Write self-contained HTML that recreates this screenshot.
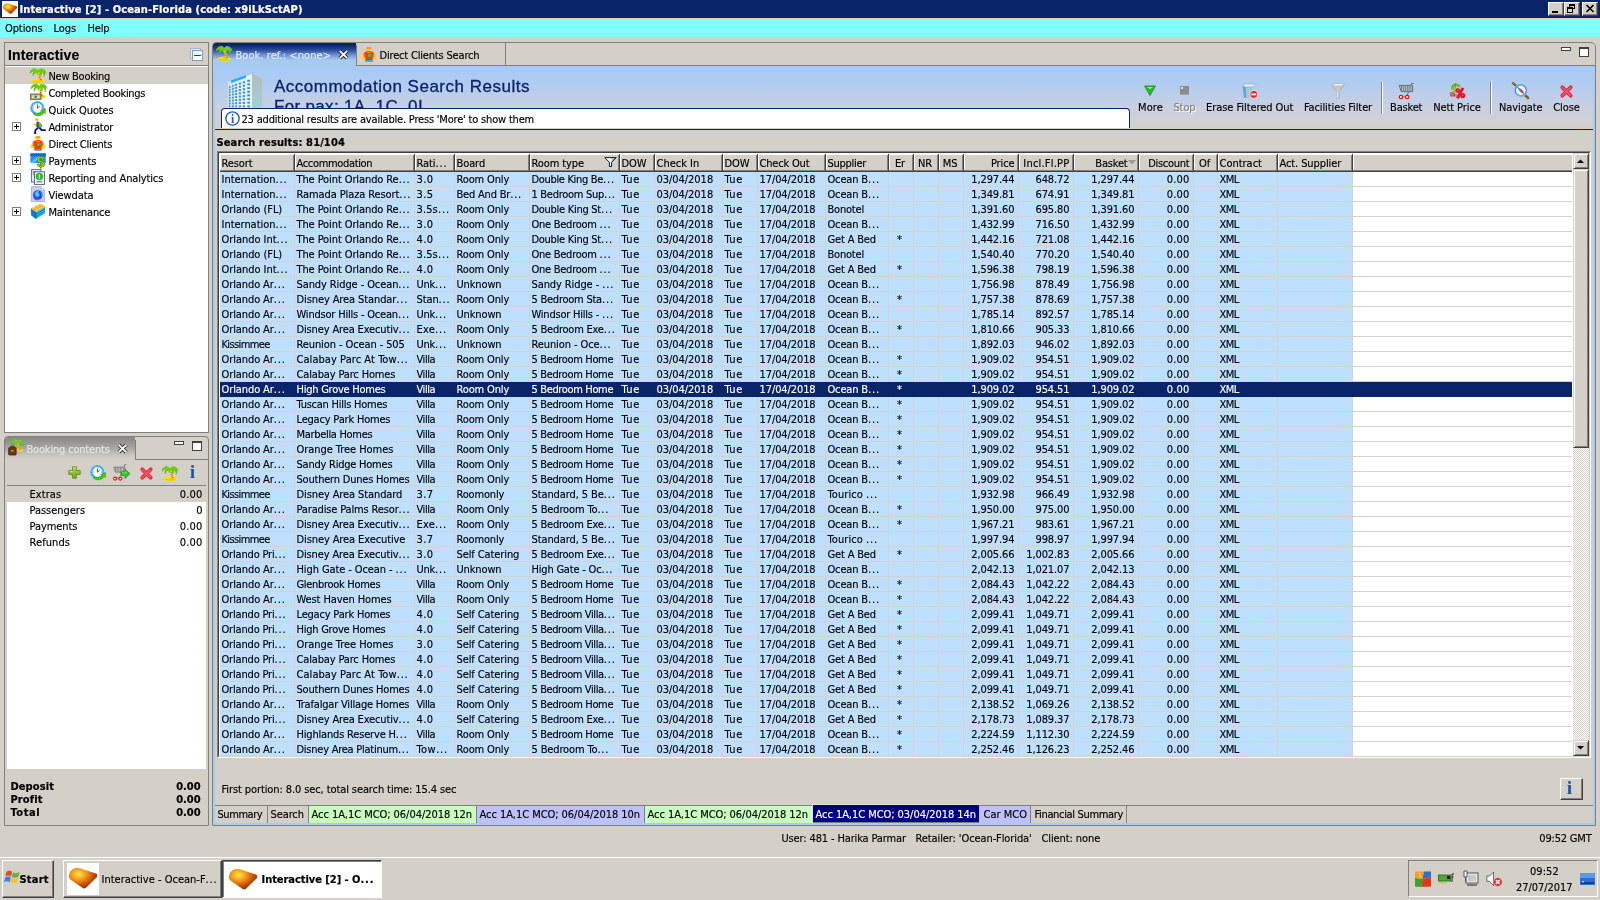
<!DOCTYPE html><html lang="en"><head><meta charset="utf-8"><title>Interactive [2] - Ocean-Florida</title><style>
*{box-sizing:border-box}
html,body{margin:0;padding:0}
body{width:1600px;height:900px;overflow:hidden;position:relative;background:#D4D0C8;color:#000;
 font-family:"DejaVu Sans Condensed","Liberation Sans",sans-serif;font-size:11px;letter-spacing:-0.1px}
body div,body span.t,body span.b{position:absolute}
.t,.b{white-space:nowrap;line-height:14px;-webkit-text-stroke:.15px}
.b{font-weight:bold;letter-spacing:0;-webkit-text-stroke:.2px}
.d{letter-spacing:.85px}
.raised{background:#D4D0C8;border:1px solid;border-color:#D4D0C8 #404040 #404040 #D4D0C8;box-shadow:inset 1px 1px 0 #fff,inset -1px -1px 0 #808080}
.btn{background:#D4D0C8;border:1px solid;border-color:#fff #404040 #404040 #fff;box-shadow:inset -1px -1px 0 #808080}
.sunken{border:1px solid;border-color:#808080 #fff #fff #808080}
svg{overflow:visible}
</style></head><body><div style="left:0;top:0;width:1600px;height:900px;will-change:transform">
<div style="left:0px;top:0px;width:1600px;height:18px;background:#0A246A"></div>
<div style="left:2px;top:1px;width:16px;height:16px;background:#fff"></div>
<div style="left:2px;top:1px"><svg width="16" height="16" viewBox="0 0 32 32" style="display:block"><defs><radialGradient id="gm16" cx="0.34" cy="0.3" r="0.66"><stop offset="0" stop-color="#FFE85E"/><stop offset=".25" stop-color="#FAB924"/><stop offset=".55" stop-color="#E67C12"/><stop offset=".85" stop-color="#B8480A"/><stop offset="1" stop-color="#A03A06"/></radialGradient></defs><path d="M2 13C2 8 6 5 10 5C14 5 18 7 22 8.200L29 10.600C30.400 11 30.600 13 30 14L19 24.800C18 25.800 16.400 25.800 15.400 24.800L3.400 16.600C2.400 15.600 2 14.400 2 13z" fill="url(#gm16)"/></svg></div>
<span class="b" style="left:19.5px;top:3px;color:#fff"><span style="letter-spacing:0.11px">Interactive [2] - Ocean-Florida (code: x9iLkSctAP)</span></span>
<div class="btn" style="left:1548px;top:2px;width:16px;height:14px;"></div>
<div class="btn" style="left:1564px;top:2px;width:16px;height:14px;"></div>
<div class="btn" style="left:1582px;top:2px;width:16px;height:14px;"></div>
<div style="left:1552px;top:11px;width:6px;height:2px;background:#000"></div>
<div style="left:1569px;top:4px;width:6px;height:5px;border:1px solid #000;border-top-width:2px"></div>
<div style="left:1567px;top:7px;width:6px;height:6px;border:1px solid #000;border-top-width:2px;background:#D4D0C8"></div>
<div style="left:1586px;top:5px"><svg width="8" height="7" viewBox="0 0 8 7" style="display:block"><path d="M.5 0l7 7M7.5 0l-7 7" stroke="#000" stroke-width="1.6"/></svg></div>
<div style="left:0px;top:19px;width:1600px;height:18px;background:#80FFFF"></div>
<span class="t" style="left:5.0px;top:22px;">Options</span>
<span class="t" style="left:53.5px;top:22px;"><span style="letter-spacing:-0.06px">Logs</span></span>
<span class="t" style="left:87.5px;top:22px;"><span style="letter-spacing:-0.17px">Help</span></span>
<div style="left:4px;top:42px;width:205px;height:391px;border:1px solid #808080;background:#fff"></div>
<div style="left:5px;top:43px;width:203px;height:22px;background:#D4D0C8"></div>
<div style="left:5px;top:65px;width:203px;height:1px;background:#808080"></div>
<span class="t" style="left:8px;top:45.5px;font:bold 14px 'Liberation Sans',sans-serif;letter-spacing:.12px;line-height:18px">Interactive</span>
<div style="left:190px;top:48px;width:11px;height:11px;border:1px solid #AAB6D2;background:#DCF0FF"></div>
<div style="left:192px;top:50px;width:11px;height:11px;border:1px solid #8C96B4;background:linear-gradient(#E4F7FF,#fff)"></div>
<div style="left:194px;top:55px;width:7px;height:1px;background:#00508C"></div>
<div style="left:5px;top:67px;width:203px;height:17px;background:#D4D0C8"></div>
<div style="left:30px;top:67px"><svg width="16" height="16" viewBox="0 0 16 16" style="display:block"><ellipse cx="8" cy="13.8" rx="7.2" ry="2" fill="#FFE100"/><ellipse cx="8" cy="14.6" rx="5.6" ry="1.1" fill="#F2C800"/><path d="M9.6 13.4C10.4 10.6 9.6 7.4 8 4.6" stroke="#F7C600" stroke-width="2.2" fill="none"/><path d="M9.2 7.4l1.2.8M9.2 10l1.2.6M10 12.8l1.6-.2" stroke="#C8620A" stroke-width="1.1"/><path d="M8 3.4C6.6.8 3.6.4 1.6 2.6.6 3.6 0 4.8.4 6.4 1.4 4.8 2.8 4.4 3.8 4.8 2.8 6 2.8 7.6 3.4 9 4 7.2 5 6 6.4 5.4 6.4 6.6 6.8 7.6 7.6 8L8.6 5C9.6 5.6 10.6 6.8 11 8.4 11.6 7 11.6 5.8 11 5 12.6 5.2 13.6 6.8 14 9.4 15 7.8 15 6 14.2 5 15.2 5.2 15.8 6 16.4 7.2 16.6 4.6 15.2 2.4 13 1.8 11 .8 9 1.2 8 3.4z" fill="#6CC81E"/><path d="M8 3.4C7.4 1.6 5.6.6 3.8.8 5.6 1.4 6.8 2.6 8 3.4zM8.4 3.2C9.6 1.6 11.4 1.2 13 1.8 11 2 9.6 2.6 8.4 3.2z" fill="#9CE23C"/><path d="M3.6 5.4C3 6.4 3 7.6 3.4 9M11.2 5.2c.4 1 .4 2.2-.2 3.2M14.2 5.2c.6 1.2.6 2.8-.2 4.2M1.2 3.4C.4 4.4.2 5.4.4 6.4" stroke="#4FAE10" stroke-width=".8" fill="none"/></svg></div>
<span class="t" style="left:48.5px;top:70px;"><span style="letter-spacing:-0.28px">New Booking</span></span>
<div style="left:30px;top:84px"><svg width="16" height="16" viewBox="0 0 16 16" style="display:block"><g transform="translate(1,-1.5)"><ellipse cx="8" cy="13.8" rx="7.2" ry="2" fill="#FFE100"/><ellipse cx="8" cy="14.6" rx="5.6" ry="1.1" fill="#F2C800"/><path d="M9.6 13.4C10.4 10.6 9.6 7.4 8 4.6" stroke="#F7C600" stroke-width="2.2" fill="none"/><path d="M9.2 7.4l1.2.8M9.2 10l1.2.6M10 12.8l1.6-.2" stroke="#C8620A" stroke-width="1.1"/><path d="M8 3.4C6.6.8 3.6.4 1.6 2.6.6 3.6 0 4.8.4 6.4 1.4 4.8 2.8 4.4 3.8 4.8 2.8 6 2.8 7.6 3.4 9 4 7.2 5 6 6.4 5.4 6.4 6.6 6.8 7.6 7.6 8L8.6 5C9.6 5.6 10.6 6.8 11 8.4 11.6 7 11.6 5.8 11 5 12.6 5.2 13.6 6.8 14 9.4 15 7.8 15 6 14.2 5 15.2 5.2 15.8 6 16.4 7.2 16.6 4.6 15.2 2.4 13 1.8 11 .8 9 1.2 8 3.4z" fill="#6CC81E"/><path d="M8 3.4C7.4 1.6 5.6.6 3.8.8 5.6 1.4 6.8 2.6 8 3.4zM8.4 3.2C9.6 1.6 11.4 1.2 13 1.8 11 2 9.6 2.6 8.4 3.2z" fill="#9CE23C"/><path d="M3.6 5.4C3 6.4 3 7.6 3.4 9M11.2 5.2c.4 1 .4 2.2-.2 3.2M14.2 5.2c.6 1.2.6 2.8-.2 4.2M1.2 3.4C.4 4.4.2 5.4.4 6.4" stroke="#4FAE10" stroke-width=".8" fill="none"/></g><rect x=".5" y="10" width="10.5" height="5.5" fill="#9AA07A" stroke="#5C6142" stroke-width=".8"/><rect x="1.8" y="11.2" width="8" height="3.2" fill="#D9DDC4"/><circle cx="5.7" cy="12.8" r="1.4" fill="#6E7450"/></svg></div>
<span class="t" style="left:48.5px;top:87px;"><span style="letter-spacing:-0.31px">Completed Bookings</span></span>
<div style="left:30px;top:101px"><svg width="16" height="16" viewBox="0 0 16 16" style="display:block"><circle cx="7.4" cy="7.2" r="6.9" fill="#1E9BF5"/><circle cx="7.4" cy="7.2" r="6.3" fill="none" stroke="#37C2FF" stroke-width="1"/><circle cx="7.4" cy="7" r="4.9" fill="#FBFBFD" stroke="#C9CED6" stroke-width=".5"/><path d="M4.2 11.4C6 13 9.6 13 11.6 10.4L10.4 9.4 15.6 7.4 15.4 12.8 14 11.8C11.6 15.6 6.6 16 3.4 13.2z" fill="#4CC417" stroke="#2E9A0A" stroke-width=".4"/><path d="M7.4 3.6v3.6l2.2-1.8" stroke="#444" stroke-width=".9" fill="none"/><circle cx="7.4" cy="2.9" r=".45" fill="#444"/><circle cx="11.4" cy="7" r=".45" fill="#444"/><circle cx="3.4" cy="7" r=".45" fill="#444"/><circle cx="5" cy="4" r=".35" fill="#888"/><circle cx="9.8" cy="4" r=".35" fill="#888"/><circle cx="4.6" cy="9.6" r=".35" fill="#888"/></svg></div>
<span class="t" style="left:48.5px;top:104px;">Quick Quotes</span>
<div style="left:30px;top:118px"><svg width="16" height="16" viewBox="0 0 16 16" style="display:block"><path d="M5.4.6l3 .4 1 2-2 1-2-1.400z" fill="#FFD23C"/><path d="M5.200 1l2.800.6" stroke="#F2A000" stroke-width=".9"/><path d="M6.600 3.400l3.400 1 1.600 3.800-3.200 2.200-2.400-2.400z" fill="#3556B8"/><path d="M9.400 4.600l2.800 2.400-.6 2.400-2.200.6-.8-3z" fill="#46A832"/><path d="M9.400 4.800l1 3.600" stroke="#F2B400" stroke-width="1"/><path d="M6.600 6.400L3.600 6.800" stroke="#FFB400" stroke-width="1.300"/><path d="M8 9.600L5.400 12.400 5 15.400M9.400 9.800l2.200 2.200 4.200.2" stroke="#14148C" stroke-width="1.800" fill="none" stroke-linejoin="round"/><path d="M4.200 15.200h2" stroke="#14148C" stroke-width="1.600"/></svg></div>
<span class="t" style="left:48.5px;top:121px;"><span style="letter-spacing:-0.21px">Administrator</span></span>
<div style="left:12px;top:122px"><svg width="9" height="9" viewBox="0 0 9 9" style="display:block"><rect x=".5" y=".5" width="8" height="8" fill="#fff" stroke="#808080"/><path d="M2 4.5h5M4.5 2v5" stroke="#000" stroke-width="1" shape-rendering="crispEdges"/></svg></div>
<div style="left:30px;top:135px"><svg width="16" height="17" viewBox="0 0 16 17" style="display:block"><path d="M5.600 1.200h4.400l.8 1.600-1 1.800H6.200L5.200 2.800z" fill="#FFC81E"/><path d="M5.400 2h4.800" stroke="#F08200" stroke-width="1.100"/><path d="M2.600 8C3.400 5.600 5.600 5 8 5s4.600.6 5.400 3l1 3.400-2 1-.8-1.400.2 4.600H4.200l.2-4.600-.8 1.400-2-1z" fill="#FA3C0A"/><path d="M6 6.200l2 .6 2-.6" stroke="#FFB400" stroke-width=".8" fill="none"/><circle cx="2.300" cy="11.800" r="1.700" fill="#FFD21E"/><circle cx="13.700" cy="11.800" r="1.700" fill="#FFD21E"/><path d="M1.600 10.400l2.400-2M14.400 10.400l-2.400-2" stroke="#FFC000" stroke-width="1.200"/><rect x="7" y="8.200" width="3.600" height="2.600" fill="#28C850"/><rect x="4.800" y="14" width="6.400" height="1.800" fill="#1EBED2"/></svg></div>
<span class="t" style="left:48.5px;top:138px;"><span style="letter-spacing:-0.2px">Direct Clients</span></span>
<div style="left:30px;top:152px"><svg width="17" height="17" viewBox="0 0 17 17" style="display:block"><rect x=".4" y="1.400" width="15.400" height="9.600" rx=".8" fill="#2A96E8"/><rect x=".4" y="1.400" width="15.400" height="2.800" fill="#1464C8"/><path d="M.8 10.600L8 4.400 11 4.400 3.400 11z" fill="#6CC0F8"/><text x="10.800" y="15" font-family="Liberation Sans" font-weight="bold" font-size="14" text-anchor="middle" fill="#A5E614" stroke="#4A8A00" stroke-width=".7" letter-spacing="0">$</text></svg></div>
<span class="t" style="left:48.5px;top:155px;"><span style="letter-spacing:-0.06px">Payments</span></span>
<div style="left:12px;top:156px"><svg width="9" height="9" viewBox="0 0 9 9" style="display:block"><rect x=".5" y=".5" width="8" height="8" fill="#fff" stroke="#808080"/><path d="M2 4.5h5M4.5 2v5" stroke="#000" stroke-width="1" shape-rendering="crispEdges"/></svg></div>
<div style="left:30px;top:169px"><svg width="16" height="16" viewBox="0 0 16 16" style="display:block"><rect x="1.400" y=".6" width="9.600" height="12.400" fill="#E6EEF5" stroke="#41698A" stroke-width=".9"/><text x="2.400" y="6" font-family="Liberation Sans" font-size="5" fill="#2AA02A" letter-spacing="0">$</text><rect x="4.400" y="2.800" width="10" height="12.600" fill="#F8FAFC" stroke="#355C7C" stroke-width=".9"/><circle cx="9.400" cy="7.600" r="3.500" fill="#28C828" stroke="#178A17" stroke-width=".5"/><path d="M9.400 5.400v3" stroke="#fff" stroke-width="1.100"/><circle cx="9.400" cy="9.600" r=".6" fill="#fff"/><path d="M6.400 12.800h6" stroke="#7A3A2A" stroke-width=".9"/></svg></div>
<span class="t" style="left:48.5px;top:172px;"><span style="letter-spacing:-0.14px">Reporting and Analytics</span></span>
<div style="left:12px;top:173px"><svg width="9" height="9" viewBox="0 0 9 9" style="display:block"><rect x=".5" y=".5" width="8" height="8" fill="#fff" stroke="#808080"/><path d="M2 4.5h5M4.5 2v5" stroke="#000" stroke-width="1" shape-rendering="crispEdges"/></svg></div>
<div style="left:30px;top:186px"><svg width="16" height="16" viewBox="0 0 16 16" style="display:block"><path d="M1.400.6h9.400l3.600 3.600v11.400H1.400z" fill="#C4D2EA" stroke="#96AACC" stroke-width=".8"/><path d="M10.800.6v3.600h3.600z" fill="#F2F5FA" stroke="#96AACC" stroke-width=".6"/><circle cx="7.800" cy="9" r="4.800" fill="#2A4ADC"/><path d="M4.600 7.400C5.600 5.200 7.600 4.400 9.400 4.800 8.400 5.800 8.400 7 9.200 7.800 10 8.600 9.400 10.400 8 11 6.800 11.400 5.200 10.600 4.600 7.400z" fill="#3CC8F0"/><path d="M3.600 11.200A4.800 4.800 0 0 0 8.200 13.800" stroke="#9A3CDC" stroke-width="1.400" fill="none"/><path d="M10.400 6l1.600 1.600-.4 2" stroke="#32B4E6" stroke-width="1" fill="none"/></svg></div>
<span class="t" style="left:48.5px;top:189px;">Viewdata</span>
<div style="left:30px;top:203px"><svg width="16" height="17" viewBox="0 0 16 17" style="display:block"><path d="M.8 5.600L10 .8 15.400 3.400 6 9z" fill="#F7B41E"/><path d="M2.200 5.600L10.600 1.400M3.800 6.600L12.200 2.200M5.400 7.600l8.400-4.400" stroke="#FFE478" stroke-width=".9"/><path d="M3 6.200L11.400 1.800M4.600 7.200L13 2.800" stroke="#D88A0A" stroke-width=".5"/><path d="M.8 5.600L6 9v7L1.200 12.400z" fill="#1478D2"/><path d="M6 9l9.400-5.600-.6 7L6 16z" fill="#28BEF0"/><path d="M6 11.400l9-5.400M6 13.800l8.800-5.600" stroke="#0A64B4" stroke-width=".8"/><path d="M6 9v7" stroke="#0A5AA8" stroke-width=".6"/></svg></div>
<span class="t" style="left:48.5px;top:206px;"><span style="letter-spacing:-0.18px">Maintenance</span></span>
<div style="left:12px;top:207px"><svg width="9" height="9" viewBox="0 0 9 9" style="display:block"><rect x=".5" y=".5" width="8" height="8" fill="#fff" stroke="#808080"/><path d="M2 4.5h5M4.5 2v5" stroke="#000" stroke-width="1" shape-rendering="crispEdges"/></svg></div>
<div style="left:4px;top:436px;width:205px;height:390px;border:1px solid #808080;border-radius:4px 4px 0 0"></div>
<div style="left:5px;top:437px;width:130px;height:22px;background:linear-gradient(#878787,#A5A3A0 45%,#CFCBC4 90%,#D4D0C8);border-radius:3px 0 0 0"></div>
<div style="left:135px;top:440px;width:1px;height:20px;background:#808080"></div>
<div style="left:135px;top:459px;width:73px;height:1px;background:#808080"></div>
<div style="left:8px;top:439px"><svg width="17" height="17" viewBox="0 0 17 17" style="display:block"><g transform="translate(2.6,-.2) scale(.84)"><ellipse cx="8" cy="13.8" rx="7.2" ry="2" fill="#FFE100"/><ellipse cx="8" cy="14.6" rx="5.6" ry="1.1" fill="#F2C800"/><path d="M9.6 13.4C10.4 10.6 9.6 7.4 8 4.6" stroke="#F7C600" stroke-width="2.2" fill="none"/><path d="M9.2 7.4l1.2.8M9.2 10l1.2.6M10 12.8l1.6-.2" stroke="#C8620A" stroke-width="1.1"/><path d="M8 3.4C6.6.8 3.6.4 1.6 2.6.6 3.6 0 4.8.4 6.4 1.4 4.8 2.8 4.4 3.8 4.8 2.8 6 2.8 7.6 3.4 9 4 7.2 5 6 6.4 5.4 6.4 6.6 6.8 7.6 7.6 8L8.6 5C9.6 5.6 10.6 6.8 11 8.4 11.6 7 11.6 5.8 11 5 12.6 5.2 13.6 6.8 14 9.4 15 7.8 15 6 14.2 5 15.2 5.2 15.8 6 16.4 7.2 16.6 4.6 15.2 2.4 13 1.8 11 .8 9 1.2 8 3.4z" fill="#6CC81E"/><path d="M8 3.4C7.4 1.6 5.6.6 3.8.8 5.6 1.4 6.8 2.6 8 3.4zM8.4 3.2C9.6 1.6 11.4 1.2 13 1.8 11 2 9.6 2.6 8.4 3.2z" fill="#9CE23C"/><path d="M3.6 5.4C3 6.4 3 7.6 3.4 9M11.2 5.2c.4 1 .4 2.2-.2 3.2M14.2 5.2c.6 1.2.6 2.8-.2 4.2M1.2 3.4C.4 4.4.2 5.4.4 6.4" stroke="#4FAE10" stroke-width=".8" fill="none"/></g><rect x=".6" y="8.6" width="7.6" height="7.4" rx=".8" fill="#6A3A1C" stroke="#3E1E0A" stroke-width=".7"/><path d="M2.8 8.4V7.2h3.2v1.2" stroke="#3E1E0A" fill="none" stroke-width=".9"/><rect x="3.4" y="11" width="2" height="1.4" fill="#E8B820"/></svg></div>
<span class="t" style="left:26.5px;top:443px;color:#E6E6E6"><span style="letter-spacing:-0.18px">Booking contents</span></span>
<div style="left:117px;top:443px"><svg width="11" height="11" viewBox="0 0 11 11" style="display:block"><path d="M1.8 1.8l7.4 7.4M9.2 1.8l-7.4 7.4" stroke="#333" stroke-width="3.6"/><path d="M1.8 1.8l7.4 7.4M9.2 1.8l-7.4 7.4" stroke="#fff" stroke-width="1.8"/></svg></div>
<div style="left:174px;top:441px;width:10px;height:4px;border:1px solid #404040;background:#fff"></div>
<div style="left:192px;top:441px;width:10px;height:10px;border:1px solid #404040;border-top-width:2px;background:#fff"></div>
<div style="left:7px;top:485px;width:199px;height:1px;background:#808080"></div>
<div style="left:68px;top:466px"><svg width="13" height="13" viewBox="0 0 13 13" style="display:block"><defs><linearGradient id="gp" x1="0" y1="0" x2="0" y2="1"><stop offset="0" stop-color="#B4DC5A"/><stop offset="1" stop-color="#6AA41E"/></linearGradient></defs><path d="M4.600.8h3.800v3.800h3.800v3.800H8.400v3.800H4.600V8.400H.8V4.600h3.800z" fill="url(#gp)" stroke="#5E8E22" stroke-width=".9" stroke-linejoin="round"/><path d="M5.600 1.800h1.800M1.800 5.600h2.800" stroke="#DCF0A0" stroke-width=".9"/></svg></div>
<div style="left:90px;top:465px"><svg width="16" height="16" viewBox="0 0 16 16" style="display:block"><circle cx="7.4" cy="7.2" r="6.9" fill="#1E9BF5"/><circle cx="7.4" cy="7.2" r="6.3" fill="none" stroke="#37C2FF" stroke-width="1"/><circle cx="7.4" cy="7" r="4.9" fill="#FBFBFD" stroke="#C9CED6" stroke-width=".5"/><path d="M4.2 11.4C6 13 9.6 13 11.6 10.4L10.4 9.4 15.6 7.4 15.4 12.8 14 11.8C11.6 15.6 6.6 16 3.4 13.2z" fill="#4CC417" stroke="#2E9A0A" stroke-width=".4"/><path d="M7.4 3.6v3.6l2.2-1.8" stroke="#444" stroke-width=".9" fill="none"/><circle cx="7.4" cy="2.9" r=".45" fill="#444"/><circle cx="11.4" cy="7" r=".45" fill="#444"/><circle cx="3.4" cy="7" r=".45" fill="#444"/><circle cx="5" cy="4" r=".35" fill="#888"/><circle cx="9.8" cy="4" r=".35" fill="#888"/><circle cx="4.6" cy="9.6" r=".35" fill="#888"/></svg></div>
<div style="left:113px;top:464px"><svg width="17" height="17" viewBox="0 0 17 17" style="display:block"><path d="M.6 3.200h10.800V.8h2.200M12 3.200v5H2.400L1 3.400M8.600 8.200L7.400 11.400" fill="none" stroke="#7A7A7A" stroke-width=".9"/><path d="M2.6 3.400v4.600M4.2 3.400v4.600M5.8 3.400v4.600M7.4 3.400v4.600M9.0 3.400v4.600M10.6 3.400v4.600" stroke="#7A7A7A" stroke-width=".8"/><path d="M3.800 14.200h2.200" stroke="#7A8A8A" stroke-width=".9"/><circle cx="2.200" cy="14.600" r="1.500" fill="#E6FFFF" stroke="#F00" stroke-width="1.100"/><circle cx="7.400" cy="14.600" r="1.500" fill="#E6FFFF" stroke="#F00" stroke-width="1.100"/><path d="M8 8h4V5l4.800 4.800L12 14.600v-3H8z" fill="#28C828" stroke="#148A14" stroke-width=".7"/><path d="M9 9h3.800V7.400" stroke="#8CF08C" stroke-width=".8" fill="none"/></svg></div>
<div style="left:140px;top:467px"><svg width="13" height="13" viewBox="0 0 13 13" style="display:block"><path d="M2.300 2.300l8.400 8.400M10.700 2.300L2.300 10.700" stroke="#E2283C" stroke-width="3.800" stroke-linecap="round"/><path d="M2.600 2.600l7.800 7.800M10.400 2.600L2.600 10.400" stroke="#F0546A" stroke-width="1.800" stroke-linecap="round"/></svg></div>
<div style="left:162px;top:465px"><svg width="16" height="16" viewBox="0 0 16 16" style="display:block"><ellipse cx="8" cy="13.8" rx="7.2" ry="2" fill="#FFE100"/><ellipse cx="8" cy="14.6" rx="5.6" ry="1.1" fill="#F2C800"/><path d="M9.6 13.4C10.4 10.6 9.6 7.4 8 4.6" stroke="#F7C600" stroke-width="2.2" fill="none"/><path d="M9.2 7.4l1.2.8M9.2 10l1.2.6M10 12.8l1.6-.2" stroke="#C8620A" stroke-width="1.1"/><path d="M8 3.4C6.6.8 3.6.4 1.6 2.6.6 3.6 0 4.8.4 6.4 1.4 4.8 2.8 4.4 3.8 4.8 2.8 6 2.8 7.6 3.4 9 4 7.2 5 6 6.4 5.4 6.4 6.6 6.8 7.6 7.6 8L8.6 5C9.6 5.6 10.6 6.8 11 8.4 11.6 7 11.6 5.8 11 5 12.6 5.2 13.6 6.8 14 9.4 15 7.8 15 6 14.2 5 15.2 5.2 15.8 6 16.4 7.2 16.6 4.6 15.2 2.4 13 1.8 11 .8 9 1.2 8 3.4z" fill="#6CC81E"/><path d="M8 3.4C7.4 1.6 5.6.6 3.8.8 5.6 1.4 6.8 2.6 8 3.4zM8.4 3.2C9.6 1.6 11.4 1.2 13 1.8 11 2 9.6 2.6 8.4 3.2z" fill="#9CE23C"/><path d="M3.6 5.4C3 6.4 3 7.6 3.4 9M11.2 5.2c.4 1 .4 2.2-.2 3.2M14.2 5.2c.6 1.2.6 2.8-.2 4.2M1.2 3.4C.4 4.4.2 5.4.4 6.4" stroke="#4FAE10" stroke-width=".8" fill="none"/></svg></div>
<span class="t" style="left:190px;top:462px;font:bold 18px 'Liberation Serif',serif;color:#1A4FB0;line-height:20px;letter-spacing:0">i</span>
<div style="left:7px;top:486px;width:199px;height:283px;background:#fff"></div>
<div style="left:7px;top:486px;width:199px;height:16px;background:#D4D0C8"></div>
<span class="t" style="left:29.5px;top:488px;"><span style="letter-spacing:0.08px">Extras</span></span>
<span class="t" style="right:1397.5px;top:488px;"><span style="letter-spacing:0.19px">0.00</span></span>
<span class="t" style="left:29.5px;top:504px;"><span style="letter-spacing:-0.03px">Passengers</span></span>
<span class="t" style="right:1397.5px;top:504px;">0</span>
<span class="t" style="left:29.5px;top:520px;"><span style="letter-spacing:-0.06px">Payments</span></span>
<span class="t" style="right:1397.5px;top:520px;"><span style="letter-spacing:0.19px">0.00</span></span>
<span class="t" style="left:29.5px;top:536px;"><span style="letter-spacing:0.08px">Refunds</span></span>
<span class="t" style="right:1397.5px;top:536px;"><span style="letter-spacing:0.19px">0.00</span></span>
<span class="b" style="left:10.5px;top:780px;"><span style="letter-spacing:0.09px">Deposit</span></span>
<span class="b" style="right:1399.5px;top:780px;"><span style="letter-spacing:-0.04px">0.00</span></span>
<span class="b" style="left:10.5px;top:793px;"><span style="letter-spacing:0.12px">Profit</span></span>
<span class="b" style="right:1399.5px;top:793px;"><span style="letter-spacing:-0.04px">0.00</span></span>
<span class="b" style="left:10.5px;top:806px;"><span style="letter-spacing:0.57px">Total</span></span>
<span class="b" style="right:1399.5px;top:806px;"><span style="letter-spacing:-0.04px">0.00</span></span>
<div style="left:212px;top:42px;width:1384px;height:784px;border:1px solid #808080;border-radius:4px 5px 0 0"></div>
<div style="left:213px;top:66px;width:1382px;height:759px;background:#A6CAF0"></div>
<div style="left:215px;top:66px;width:1378px;height:757px;background:#D4D0C8"></div>
<div style="left:356px;top:65px;width:1239px;height:1px;background:#808080"></div>
<div style="left:213px;top:43px;width:143px;height:23px;background:linear-gradient(#0A246A 0%,#0A246A 8%,#29499A 30%,#6E91D3 52%,#A6CAF0 74%,#A6CAF0 100%);border-radius:3px 0 0 0"></div>
<div style="left:356px;top:45px;width:1px;height:20px;background:#808080"></div>
<div style="left:216px;top:45px"><svg width="16" height="16" viewBox="0 0 16 16" style="display:block"><ellipse cx="8" cy="13.8" rx="7.2" ry="2" fill="#FFE100"/><ellipse cx="8" cy="14.6" rx="5.6" ry="1.1" fill="#F2C800"/><path d="M9.6 13.4C10.4 10.6 9.6 7.4 8 4.6" stroke="#F7C600" stroke-width="2.2" fill="none"/><path d="M9.2 7.4l1.2.8M9.2 10l1.2.6M10 12.8l1.6-.2" stroke="#C8620A" stroke-width="1.1"/><path d="M8 3.4C6.6.8 3.6.4 1.6 2.6.6 3.6 0 4.8.4 6.4 1.4 4.8 2.8 4.4 3.8 4.8 2.8 6 2.8 7.6 3.4 9 4 7.2 5 6 6.4 5.4 6.4 6.6 6.8 7.6 7.6 8L8.6 5C9.6 5.6 10.6 6.8 11 8.4 11.6 7 11.6 5.8 11 5 12.6 5.2 13.6 6.8 14 9.4 15 7.8 15 6 14.2 5 15.2 5.2 15.8 6 16.4 7.2 16.6 4.6 15.2 2.4 13 1.8 11 .8 9 1.2 8 3.4z" fill="#6CC81E"/><path d="M8 3.4C7.4 1.6 5.6.6 3.8.8 5.6 1.4 6.8 2.6 8 3.4zM8.4 3.2C9.6 1.6 11.4 1.2 13 1.8 11 2 9.6 2.6 8.4 3.2z" fill="#9CE23C"/><path d="M3.6 5.4C3 6.4 3 7.6 3.4 9M11.2 5.2c.4 1 .4 2.2-.2 3.2M14.2 5.2c.6 1.2.6 2.8-.2 4.2M1.2 3.4C.4 4.4.2 5.4.4 6.4" stroke="#4FAE10" stroke-width=".8" fill="none"/></svg></div>
<span class="t" style="left:235.5px;top:49px;color:#E6EFFC"><span style="letter-spacing:0.06px">Book. ref.: &lt;none&gt;</span></span>
<div style="left:338px;top:49px"><svg width="11" height="11" viewBox="0 0 11 11" style="display:block"><path d="M1.8 1.8l7.4 7.4M9.2 1.8l-7.4 7.4" stroke="#222" stroke-width="3.6"/><path d="M1.8 1.8l7.4 7.4M9.2 1.8l-7.4 7.4" stroke="#fff" stroke-width="1.8"/></svg></div>
<div style="left:361px;top:46px"><svg width="16" height="17" viewBox="0 0 16 17" style="display:block"><path d="M5.600 1.200h4.400l.8 1.600-1 1.800H6.200L5.200 2.800z" fill="#FFC81E"/><path d="M5.400 2h4.800" stroke="#F08200" stroke-width="1.100"/><path d="M2.600 8C3.400 5.600 5.600 5 8 5s4.600.6 5.400 3l1 3.400-2 1-.8-1.400.2 4.600H4.200l.2-4.600-.8 1.400-2-1z" fill="#FA3C0A"/><path d="M6 6.200l2 .6 2-.6" stroke="#FFB400" stroke-width=".8" fill="none"/><circle cx="2.300" cy="11.800" r="1.700" fill="#FFD21E"/><circle cx="13.700" cy="11.800" r="1.700" fill="#FFD21E"/><path d="M1.600 10.400l2.400-2M14.400 10.400l-2.400-2" stroke="#FFC000" stroke-width="1.200"/><rect x="7" y="8.200" width="3.600" height="2.600" fill="#28C850"/><rect x="4.800" y="14" width="6.400" height="1.800" fill="#1EBED2"/></svg></div>
<span class="t" style="left:379.5px;top:49px;"><span style="letter-spacing:-0.18px">Direct Clients Search</span></span>
<div style="left:505px;top:43px;width:1px;height:22px;background:#808080"></div>
<div style="left:1561px;top:47px;width:10px;height:4px;border:1px solid #404040;background:#fff"></div>
<div style="left:1579px;top:47px;width:10px;height:10px;border:1px solid #404040;border-top-width:2px;background:#fff"></div>
<div style="left:215px;top:66px;width:1378px;height:63px;background:linear-gradient(#A4CAF6 0%,#B2CCF0 30%,#BECEE8 50%,#CAD0E0 66%,#D0D0D6 85%,#D4D0C8 100%)"></div>
<div style="left:227px;top:70px"><svg width="36" height="38" viewBox="0 0 36 38" style="display:block"><defs><linearGradient id="hg" x1="0" y1="0" x2="0" y2="1"><stop offset="0" stop-color="#B4BCBC"/><stop offset="1" stop-color="#A2D2D2"/></linearGradient><linearGradient id="hf" x1="0" y1="0" x2="1" y2="0"><stop offset="0" stop-color="#D8E2E8"/><stop offset="1" stop-color="#F0F3F5"/></linearGradient></defs><path d="M1 12L25 4V38H1z" fill="url(#hf)"/><path d="M25 4l10 4.5V38H25z" fill="url(#hg)"/><path d="M4 10.4L19 5.2v2.6L4 13z" fill="#1EB0FF"/><rect x="2.0" y="15.9" width="1.5" height="1.9" fill="#1E96E6"/><rect x="2.0" y="18.7" width="1.5" height="1.9" fill="#1E96E6"/><rect x="2.0" y="21.4" width="1.5" height="1.9" fill="#1E96E6"/><rect x="2.0" y="24.2" width="1.5" height="1.9" fill="#1E96E6"/><rect x="2.0" y="27.0" width="1.5" height="1.9" fill="#1E96E6"/><rect x="2.0" y="29.8" width="1.5" height="1.9" fill="#1E96E6"/><rect x="2.0" y="32.6" width="1.5" height="1.9" fill="#1E96E6"/><rect x="2.0" y="35.4" width="1.5" height="1.9" fill="#1E96E6"/><rect x="5.1" y="14.8" width="1.6" height="1.9" fill="#1E96E6"/><rect x="5.1" y="17.8" width="1.6" height="1.9" fill="#1E96E6"/><rect x="5.1" y="20.7" width="1.6" height="1.9" fill="#1E96E6"/><rect x="5.1" y="23.6" width="1.6" height="1.9" fill="#1E96E6"/><rect x="5.1" y="26.6" width="1.6" height="1.9" fill="#1E96E6"/><rect x="5.1" y="29.5" width="1.6" height="1.9" fill="#1E96E6"/><rect x="5.1" y="32.5" width="1.6" height="1.9" fill="#1E96E6"/><rect x="5.1" y="35.4" width="1.6" height="1.9" fill="#1E96E6"/><rect x="8.2" y="13.8" width="1.8" height="1.9" fill="#1E96E6"/><rect x="8.2" y="16.9" width="1.8" height="1.9" fill="#1E96E6"/><rect x="8.2" y="20.0" width="1.8" height="1.9" fill="#1E96E6"/><rect x="8.2" y="23.1" width="1.8" height="1.9" fill="#1E96E6"/><rect x="8.2" y="26.1" width="1.8" height="1.9" fill="#1E96E6"/><rect x="8.2" y="29.2" width="1.8" height="1.9" fill="#1E96E6"/><rect x="8.2" y="32.3" width="1.8" height="1.9" fill="#1E96E6"/><rect x="8.2" y="35.4" width="1.8" height="1.9" fill="#1E96E6"/><rect x="11.9" y="12.6" width="2.0" height="1.9" fill="#1E96E6"/><rect x="11.9" y="15.8" width="2.0" height="1.9" fill="#1E96E6"/><rect x="11.9" y="19.1" width="2.0" height="1.9" fill="#1E96E6"/><rect x="11.9" y="22.4" width="2.0" height="1.9" fill="#1E96E6"/><rect x="11.9" y="25.6" width="2.0" height="1.9" fill="#1E96E6"/><rect x="11.9" y="28.9" width="2.0" height="1.9" fill="#1E96E6"/><rect x="11.9" y="32.1" width="2.0" height="1.9" fill="#1E96E6"/><rect x="11.9" y="35.4" width="2.0" height="1.9" fill="#1E96E6"/><rect x="15.8" y="11.3" width="2.2" height="1.9" fill="#1E96E6"/><rect x="15.8" y="14.7" width="2.2" height="1.9" fill="#1E96E6"/><rect x="15.8" y="18.2" width="2.2" height="1.9" fill="#1E96E6"/><rect x="15.8" y="21.6" width="2.2" height="1.9" fill="#1E96E6"/><rect x="15.8" y="25.1" width="2.2" height="1.9" fill="#1E96E6"/><rect x="15.8" y="28.5" width="2.2" height="1.9" fill="#1E96E6"/><rect x="15.8" y="32.0" width="2.2" height="1.9" fill="#1E96E6"/><rect x="15.8" y="35.4" width="2.2" height="1.9" fill="#1E96E6"/><rect x="20.3" y="9.8" width="2.7" height="1.9" fill="#1E96E6"/><rect x="20.3" y="13.4" width="2.7" height="1.9" fill="#1E96E6"/><rect x="20.3" y="17.1" width="2.7" height="1.9" fill="#1E96E6"/><rect x="20.3" y="20.8" width="2.7" height="1.9" fill="#1E96E6"/><rect x="20.3" y="24.4" width="2.7" height="1.9" fill="#1E96E6"/><rect x="20.3" y="28.1" width="2.7" height="1.9" fill="#1E96E6"/><rect x="20.3" y="31.7" width="2.7" height="1.9" fill="#1E96E6"/><rect x="20.3" y="35.4" width="2.7" height="1.9" fill="#1E96E6"/></svg></div>
<div style="left:274px;top:77px;width:400px;height:31px;overflow:hidden"><span class="t" style="left:0;top:0;font:17px 'Liberation Sans',sans-serif;color:#0A246A;line-height:20px;letter-spacing:.5px;-webkit-text-stroke:.3px #0A246A">Accommodation Search Results<br><span style="letter-spacing:.33px">For pax: 1A, 1C, 0I</span></span></div>
<div style="left:221px;top:108px;width:909px;height:20px;background:#fff;border:1px solid #0A246A;border-bottom:none;border-radius:4px 4px 0 0"></div>
<div style="left:225px;top:111px"><svg width="15" height="15" viewBox="0 0 15 15" style="display:block"><circle cx="7.5" cy="7.5" r="6.6" fill="#fff" stroke="#1E62B8" stroke-width="1.4"/><text x="7.6" y="11.6" font-family="Liberation Serif" font-weight="bold" font-size="11.5" text-anchor="middle" fill="#1E62B8">i</text></svg></div>
<span class="t" style="left:241.5px;top:113px;"><span style="letter-spacing:-0.19px">23 additional results are available. Press 'More' to show them</span></span>
<div style="left:215px;top:129px;width:1378px;height:1px;background:#0A246A"></div>
<div style="left:1144px;top:85px"><svg width="12" height="11" viewBox="0 0 12 11" style="display:block"><path d="M.6 1h10.8L6 10.4z" fill="#2DB82D" stroke="#158A15" stroke-width=".8"/><path d="M2.6 2h6.8L6 4z" fill="#8CF08C"/></svg></div>
<span class="t" style="left:1000.5px;width:300px;text-align:center;top:101px;"><span style="letter-spacing:0.12px">More</span></span>
<div style="left:1180px;top:86px"><svg width="9" height="9" viewBox="0 0 9 9" style="display:block"><rect x="0" y="0" width="9" height="8.6" fill="#8C8C8C"/><rect x="1" y="1" width="2" height="2" fill="#E4E4E4"/></svg></div>
<span class="t" style="left:1035.5px;width:300px;text-align:center;top:102px;color:#fff">Stop</span>
<span class="t" style="left:1034.5px;width:300px;text-align:center;top:101px;color:#808080">Stop</span>
<div style="left:1242px;top:83px"><svg width="16" height="16" viewBox="0 0 16 16" style="display:block"><path d="M.6 2.400h13.400l-1.200 12.400H1.800z" fill="#B4D2E6"/><path d="M.6 2.400h3.400l.6 12.400H1.800z" fill="#6EA5CD"/><path d="M6 3.600l.2 11M9 3.600v11" stroke="#8FBAD8" stroke-width="1"/><ellipse cx="7.300" cy="2.400" rx="6.700" ry="1.800" fill="#DCEBF5" stroke="#7FA9C4" stroke-width=".7"/><circle cx="11.800" cy="11.400" r="4" fill="#E8242C" stroke="#fff" stroke-width=".7"/><rect x="9.300" y="10.500" width="5" height="1.800" fill="#fff"/></svg></div>
<span class="t" style="left:1099.7px;width:300px;text-align:center;top:101px;"><span style="letter-spacing:-0.07px">Erase Filtered Out</span></span>
<div style="left:1331px;top:83px"><svg width="14" height="16" viewBox="0 0 14 16" style="display:block"><path d="M.6 1.6h12.8L8 8.4v6.4l-2 .8V8.4z" fill="#C8C8C8" stroke="#9A9A9A" stroke-width=".6"/><ellipse cx="7" cy="1.8" rx="6.2" ry="1.3" fill="#EDEDED" stroke="#A8A8A8" stroke-width=".5"/><path d="M6.6 8v7" stroke="#F6F6F6" stroke-width=".8"/></svg></div>
<span class="t" style="left:1188px;width:300px;text-align:center;top:101px;">Facilities Filter</span>
<div style="left:1398px;top:83px"><svg width="16" height="16" viewBox="0 0 16 16" style="display:block"><path d="M1 2.400h12.400V.6h2.400M14.600 2.400v6.200H3.200L1.400 2.600M10.800 8.600L9.200 12" fill="none" stroke="#6E6E6E" stroke-width="1"/><path d="M3.5 2.600v5.800M5.4 2.600v5.800M7.3 2.600v5.800M9.2 2.600v5.800M11.1 2.600v5.800M13.0 2.600v5.800" stroke="#6E6E6E" stroke-width=".9"/><path d="M4.800 13.700h2.600" stroke="#7A8A8A" stroke-width=".9"/><circle cx="3" cy="14" r="1.700" fill="#E6FFFF" stroke="#F00" stroke-width="1.200"/><circle cx="9.200" cy="14" r="1.700" fill="#E6FFFF" stroke="#F00" stroke-width="1.200"/></svg></div>
<span class="t" style="left:1256.2px;width:300px;text-align:center;top:101px;"><span style="letter-spacing:-0.19px">Basket</span></span>
<div style="left:1449px;top:83px"><svg width="17" height="16" viewBox="0 0 17 16" style="display:block"><path d="M2.400 6.400C1.200 3.600 3.400.8 6.600.6 9 .4 10.800 1.600 11.600 3.200L9.400 4.400C8.600 3.200 7.400 2.800 6.200 3 4.800 3.400 4.400 4.800 5 6.200z" fill="#7AAE2E"/><path d="M4 5.600C5 4.600 7 4.400 8.400 5.200L6.800 9 4.400 8.400z" fill="#9CC84A"/><path d="M6.400.2v5" stroke="#5E8E1E" stroke-width=".8"/><path d="M.8 10.400l3-1.400 2.400.4" stroke="#6FA428" stroke-width="1.200" fill="none"/><path d="M6 11l1 3.400 1.600-2.600z" fill="#6FA428"/><rect x="1.400" y="10.400" width="4.600" height="3" fill="#EE1020"/><rect x="2.400" y="11.500" width="2.400" height=".8" fill="#FFC8C8"/><circle cx="8.800" cy="7.600" r="2.400" fill="#EE1020"/><circle cx="13.800" cy="12.600" r="2.600" fill="#EE1020"/><path d="M14 4.800L8.400 15.400" stroke="#EE1020" stroke-width="2.800"/><circle cx="8.800" cy="7.600" r=".7" fill="#F88"/><circle cx="13.800" cy="12.600" r=".7" fill="#F88"/></svg></div>
<span class="t" style="left:1307px;width:300px;text-align:center;top:101px;">Nett Price</span>
<div style="left:1512px;top:82px"><svg width="17" height="17" viewBox="0 0 17 17" style="display:block"><path d="M1 1.200l3.400 3" stroke="#8A5A22" stroke-width="2.400" stroke-linecap="round"/><path d="M13 13l3 3" stroke="#8A5A22" stroke-width="2.600" stroke-linecap="round"/><path d="M1.600 1l1 1M14.600 15.600l1 .6" stroke="#C89A4A" stroke-width=".8"/><circle cx="8.800" cy="8.400" r="6.400" fill="#EEF2F6" stroke="#B4BEC8" stroke-width=".8"/><circle cx="8.800" cy="8.400" r="5.500" fill="none" stroke="#3C8CDC" stroke-width="1.300"/><path d="M4.200 11.400A5.500 5.500 0 0 0 13.400 11.400" stroke="#2CC8E8" stroke-width="1.300" fill="none"/><path d="M4.600 4.200l5.400 3.400-2.200 2z" fill="#2C8CE0"/><path d="M12.400 12.200L7.800 9.600l2.200-2z" fill="#F01818"/><path d="M10.600 3.400l1.400 1.400M12.600 6.800h1.200" stroke="#9AA4B0" stroke-width=".7"/></svg></div>
<span class="t" style="left:1370.8px;width:300px;text-align:center;top:101px;">Navigate</span>
<div style="left:1560px;top:85px"><svg width="13" height="13" viewBox="0 0 13 13" style="display:block"><path d="M2.300 2.300l8.400 8.400M10.700 2.300L2.300 10.700" stroke="#E2283C" stroke-width="3.800" stroke-linecap="round"/><path d="M2.600 2.600l7.800 7.800M10.400 2.600L2.600 10.400" stroke="#F0546A" stroke-width="1.800" stroke-linecap="round"/></svg></div>
<span class="t" style="left:1416.5px;width:300px;text-align:center;top:101px;">Close</span>
<div style="left:1381px;top:82px;width:1px;height:32px;background:#808080"></div>
<div style="left:1382px;top:82px;width:1px;height:32px;background:#fff"></div>
<div style="left:1490px;top:82px;width:1px;height:32px;background:#808080"></div>
<div style="left:1491px;top:82px;width:1px;height:32px;background:#fff"></div>
<span class="b" style="left:216.5px;top:136px;"><span style="letter-spacing:0.12px">Search results: 81/104</span></span>
<div style="left:217px;top:151px;width:1374px;height:607px;border:1px solid;border-color:#808080 #fff #fff #808080;background:#fff"></div>
<div style="left:218px;top:152px;width:1372px;height:605px;border:1px solid;border-color:#404040 #D4D0C8 #D4D0C8 #404040"></div>
<div style="left:220px;top:154px;width:1352px;height:18px;background:#D4D0C8;border-top:1px solid #fff;border-bottom:1px solid #404040;box-shadow:inset 0 -1px 0 #808080"></div>
<div style="left:220px;top:172px;width:1133px;height:584px;background:repeating-linear-gradient(#BFDFFF 0,#BFDFFF 14px,#D6D2CC 14px,#D6D2CC 15px)"></div>
<div style="left:1353px;top:172px;width:219px;height:584px;background:repeating-linear-gradient(#fff 0,#fff 14px,#D6D2CC 14px,#D6D2CC 15px)"></div>
<div style="left:294px;top:172px;width:1px;height:584px;background:#D6D2CC"></div>
<div style="left:220px;top:155px;width:1px;height:15px;background:#fff"></div>
<div style="left:293px;top:155px;width:1px;height:16px;background:#808080"></div>
<div style="left:294px;top:154px;width:1px;height:18px;background:#404040"></div>
<span class="t" style="left:221.5px;top:157px;">Resort</span>
<div style="left:414px;top:172px;width:1px;height:584px;background:#D6D2CC"></div>
<div style="left:295px;top:155px;width:1px;height:15px;background:#fff"></div>
<div style="left:413px;top:155px;width:1px;height:16px;background:#808080"></div>
<div style="left:414px;top:154px;width:1px;height:18px;background:#404040"></div>
<span class="t" style="left:296.5px;top:157px;"><span style="letter-spacing:-0.34px">Accommodation</span></span>
<div style="left:454px;top:172px;width:1px;height:584px;background:#D6D2CC"></div>
<div style="left:415px;top:155px;width:1px;height:15px;background:#fff"></div>
<div style="left:453px;top:155px;width:1px;height:16px;background:#808080"></div>
<div style="left:454px;top:154px;width:1px;height:18px;background:#404040"></div>
<span class="t" style="left:416.5px;top:157px;">Rati<span class="d">...</span></span>
<div style="left:529px;top:172px;width:1px;height:584px;background:#D6D2CC"></div>
<div style="left:455px;top:155px;width:1px;height:15px;background:#fff"></div>
<div style="left:528px;top:155px;width:1px;height:16px;background:#808080"></div>
<div style="left:529px;top:154px;width:1px;height:18px;background:#404040"></div>
<span class="t" style="left:456.5px;top:157px;">Board</span>
<div style="left:619px;top:172px;width:1px;height:584px;background:#D6D2CC"></div>
<div style="left:530px;top:155px;width:1px;height:15px;background:#fff"></div>
<div style="left:618px;top:155px;width:1px;height:16px;background:#808080"></div>
<div style="left:619px;top:154px;width:1px;height:18px;background:#404040"></div>
<span class="t" style="left:531.5px;top:157px;">Room type</span>
<div style="left:654px;top:172px;width:1px;height:584px;background:#D6D2CC"></div>
<div style="left:620px;top:155px;width:1px;height:15px;background:#fff"></div>
<div style="left:653px;top:155px;width:1px;height:16px;background:#808080"></div>
<div style="left:654px;top:154px;width:1px;height:18px;background:#404040"></div>
<span class="t" style="left:621.5px;top:157px;">DOW</span>
<div style="left:722px;top:172px;width:1px;height:584px;background:#D6D2CC"></div>
<div style="left:655px;top:155px;width:1px;height:15px;background:#fff"></div>
<div style="left:721px;top:155px;width:1px;height:16px;background:#808080"></div>
<div style="left:722px;top:154px;width:1px;height:18px;background:#404040"></div>
<span class="t" style="left:656.5px;top:157px;"><span style="letter-spacing:-0.01px">Check In</span></span>
<div style="left:757px;top:172px;width:1px;height:584px;background:#D6D2CC"></div>
<div style="left:723px;top:155px;width:1px;height:15px;background:#fff"></div>
<div style="left:756px;top:155px;width:1px;height:16px;background:#808080"></div>
<div style="left:757px;top:154px;width:1px;height:18px;background:#404040"></div>
<span class="t" style="left:724.5px;top:157px;">DOW</span>
<div style="left:825px;top:172px;width:1px;height:584px;background:#D6D2CC"></div>
<div style="left:758px;top:155px;width:1px;height:15px;background:#fff"></div>
<div style="left:824px;top:155px;width:1px;height:16px;background:#808080"></div>
<div style="left:825px;top:154px;width:1px;height:18px;background:#404040"></div>
<span class="t" style="left:759.5px;top:157px;"><span style="letter-spacing:-0.19px">Check Out</span></span>
<div style="left:888px;top:172px;width:1px;height:584px;background:#D6D2CC"></div>
<div style="left:826px;top:155px;width:1px;height:15px;background:#fff"></div>
<div style="left:887px;top:155px;width:1px;height:16px;background:#808080"></div>
<div style="left:888px;top:154px;width:1px;height:18px;background:#404040"></div>
<span class="t" style="left:827.5px;top:157px;"><span style="letter-spacing:-0.27px">Supplier</span></span>
<div style="left:913px;top:172px;width:1px;height:584px;background:#D6D2CC"></div>
<div style="left:889px;top:155px;width:1px;height:15px;background:#fff"></div>
<div style="left:912px;top:155px;width:1px;height:16px;background:#808080"></div>
<div style="left:913px;top:154px;width:1px;height:18px;background:#404040"></div>
<span class="t" style="left:750.0px;width:300px;text-align:center;top:157px;">Er</span>
<div style="left:938px;top:172px;width:1px;height:584px;background:#D6D2CC"></div>
<div style="left:914px;top:155px;width:1px;height:15px;background:#fff"></div>
<div style="left:937px;top:155px;width:1px;height:16px;background:#808080"></div>
<div style="left:938px;top:154px;width:1px;height:18px;background:#404040"></div>
<span class="t" style="left:775.0px;width:300px;text-align:center;top:157px;">NR</span>
<div style="left:963px;top:172px;width:1px;height:584px;background:#D6D2CC"></div>
<div style="left:939px;top:155px;width:1px;height:15px;background:#fff"></div>
<div style="left:962px;top:155px;width:1px;height:16px;background:#808080"></div>
<div style="left:963px;top:154px;width:1px;height:18px;background:#404040"></div>
<span class="t" style="left:800.0px;width:300px;text-align:center;top:157px;">MS</span>
<div style="left:1018px;top:172px;width:1px;height:584px;background:#D6D2CC"></div>
<div style="left:964px;top:155px;width:1px;height:15px;background:#fff"></div>
<div style="left:1017px;top:155px;width:1px;height:16px;background:#808080"></div>
<div style="left:1018px;top:154px;width:1px;height:18px;background:#404040"></div>
<span class="t" style="right:585.5px;top:157px;">Price</span>
<div style="left:1073px;top:172px;width:1px;height:584px;background:#D6D2CC"></div>
<div style="left:1019px;top:155px;width:1px;height:15px;background:#fff"></div>
<div style="left:1072px;top:155px;width:1px;height:16px;background:#808080"></div>
<div style="left:1073px;top:154px;width:1px;height:18px;background:#404040"></div>
<span class="t" style="right:530.5px;top:157px;"><span style="letter-spacing:0.22px">Incl.Fl.PP</span></span>
<div style="left:1138px;top:172px;width:1px;height:584px;background:#D6D2CC"></div>
<div style="left:1074px;top:155px;width:1px;height:15px;background:#fff"></div>
<div style="left:1137px;top:155px;width:1px;height:16px;background:#808080"></div>
<div style="left:1138px;top:154px;width:1px;height:18px;background:#404040"></div>
<span class="t" style="right:472.5px;top:157px;"><span style="letter-spacing:-0.19px">Basket</span></span>
<div style="left:1193px;top:172px;width:1px;height:584px;background:#D6D2CC"></div>
<div style="left:1139px;top:155px;width:1px;height:15px;background:#fff"></div>
<div style="left:1192px;top:155px;width:1px;height:16px;background:#808080"></div>
<div style="left:1193px;top:154px;width:1px;height:18px;background:#404040"></div>
<span class="t" style="right:410.5px;top:157px;"><span style="letter-spacing:-0.26px">Discount</span></span>
<div style="left:1217px;top:172px;width:1px;height:584px;background:#D6D2CC"></div>
<div style="left:1194px;top:155px;width:1px;height:15px;background:#fff"></div>
<div style="left:1216px;top:155px;width:1px;height:16px;background:#808080"></div>
<div style="left:1217px;top:154px;width:1px;height:18px;background:#404040"></div>
<span class="t" style="left:1054.5px;width:300px;text-align:center;top:157px;">Of</span>
<div style="left:1277px;top:172px;width:1px;height:584px;background:#D6D2CC"></div>
<div style="left:1218px;top:155px;width:1px;height:15px;background:#fff"></div>
<div style="left:1276px;top:155px;width:1px;height:16px;background:#808080"></div>
<div style="left:1277px;top:154px;width:1px;height:18px;background:#404040"></div>
<span class="t" style="left:1219.5px;top:157px;"><span style="letter-spacing:-0.02px">Contract</span></span>
<div style="left:1352px;top:172px;width:1px;height:584px;background:#D6D2CC"></div>
<div style="left:1278px;top:155px;width:1px;height:15px;background:#fff"></div>
<div style="left:1351px;top:155px;width:1px;height:16px;background:#808080"></div>
<div style="left:1352px;top:154px;width:1px;height:18px;background:#404040"></div>
<span class="t" style="left:1279.5px;top:157px;">Act. Supplier</span>
<div style="left:1353px;top:155px;width:1px;height:15px;background:#fff"></div>
<div style="left:220px;top:382px;width:1352px;height:15px;background:#0A246A"></div>
<div style="left:604px;top:157px"><svg width="13" height="10" viewBox="0 0 13 10" style="display:block"><defs><linearGradient id="fg" x1="0" y1="0" x2="1" y2="0"><stop offset="0" stop-color="#fff"/><stop offset=".45" stop-color="#F4F8FC"/><stop offset="1" stop-color="#5E7FA8"/></linearGradient></defs><path d="M.8.6h11.400L7.600 5.400v4.100H5.400V5.400z" fill="url(#fg)" stroke="#10182C" stroke-width="1"/></svg></div>
<div style="left:1128px;top:160px"><svg width="8" height="5" viewBox="0 0 8 5" style="display:block"><path d="M0 0h8L4 4.6z" fill="#9A9A9A"/></svg></div>
<span class="t" style="left:221.5px;top:173px;"><span style="letter-spacing:-0.03px">Internation</span><span class="d">...</span></span>
<span class="t" style="left:296.5px;top:173px;">The Point Orlando Re<span class="d">...</span></span>
<span class="t" style="left:416.5px;top:173px;"><span style="letter-spacing:0.35px">3.0</span></span>
<span class="t" style="left:456.5px;top:173px;"><span style="letter-spacing:-0.15px">Room Only</span></span>
<span class="t" style="left:531.5px;top:173px;"><span style="letter-spacing:-0.33px">Double King Be</span><span class="d">...</span></span>
<span class="t" style="left:621.5px;top:173px;"><span style="letter-spacing:0.49px">Tue</span></span>
<span class="t" style="left:656.5px;top:173px;"><span style="letter-spacing:-0.04px">03/04/2018</span></span>
<span class="t" style="left:724.5px;top:173px;"><span style="letter-spacing:0.49px">Tue</span></span>
<span class="t" style="left:759.5px;top:173px;">17/04/2018</span>
<span class="t" style="left:827.5px;top:173px;"><span style="letter-spacing:-0.17px">Ocean B</span><span class="d">...</span></span>
<span class="t" style="right:585.5px;top:173px;">1,297.44</span>
<span class="t" style="right:530.5px;top:173px;">648.72</span>
<span class="t" style="right:465.5px;top:173px;">1,297.44</span>
<span class="t" style="right:410.5px;top:173px;"><span style="letter-spacing:0.19px">0.00</span></span>
<span class="t" style="left:1219.5px;top:173px;"><span style="letter-spacing:-0.48px">XML</span></span>
<span class="t" style="left:221.5px;top:188px;"><span style="letter-spacing:-0.03px">Internation</span><span class="d">...</span></span>
<span class="t" style="left:296.5px;top:188px;">Ramada Plaza Resort<span class="d">...</span></span>
<span class="t" style="left:416.5px;top:188px;"><span style="letter-spacing:0.35px">3.5</span></span>
<span class="t" style="left:456.5px;top:188px;"><span style="letter-spacing:-0.2px">Bed And Br</span><span class="d">...</span></span>
<span class="t" style="left:531.5px;top:188px;"><span style="letter-spacing:-0.29px">1 Bedroom Sup</span><span class="d">...</span></span>
<span class="t" style="left:621.5px;top:188px;"><span style="letter-spacing:0.49px">Tue</span></span>
<span class="t" style="left:656.5px;top:188px;"><span style="letter-spacing:-0.04px">03/04/2018</span></span>
<span class="t" style="left:724.5px;top:188px;"><span style="letter-spacing:0.49px">Tue</span></span>
<span class="t" style="left:759.5px;top:188px;">17/04/2018</span>
<span class="t" style="left:827.5px;top:188px;"><span style="letter-spacing:-0.17px">Ocean B</span><span class="d">...</span></span>
<span class="t" style="right:585.5px;top:188px;">1,349.81</span>
<span class="t" style="right:530.5px;top:188px;">674.91</span>
<span class="t" style="right:465.5px;top:188px;">1,349.81</span>
<span class="t" style="right:410.5px;top:188px;"><span style="letter-spacing:0.19px">0.00</span></span>
<span class="t" style="left:1219.5px;top:188px;"><span style="letter-spacing:-0.48px">XML</span></span>
<span class="t" style="left:221.5px;top:203px;"><span style="letter-spacing:-0.06px">Orlando (FL)</span></span>
<span class="t" style="left:296.5px;top:203px;">The Point Orlando Re<span class="d">...</span></span>
<span class="t" style="left:416.5px;top:203px;"><span style="letter-spacing:0.13px">3.5s</span><span class="d">...</span></span>
<span class="t" style="left:456.5px;top:203px;"><span style="letter-spacing:-0.15px">Room Only</span></span>
<span class="t" style="left:531.5px;top:203px;"><span style="letter-spacing:-0.28px">Double King St</span><span class="d">...</span></span>
<span class="t" style="left:621.5px;top:203px;"><span style="letter-spacing:0.49px">Tue</span></span>
<span class="t" style="left:656.5px;top:203px;"><span style="letter-spacing:-0.04px">03/04/2018</span></span>
<span class="t" style="left:724.5px;top:203px;"><span style="letter-spacing:0.49px">Tue</span></span>
<span class="t" style="left:759.5px;top:203px;">17/04/2018</span>
<span class="t" style="left:827.5px;top:203px;"><span style="letter-spacing:-0.21px">Bonotel</span></span>
<span class="t" style="right:585.5px;top:203px;">1,391.60</span>
<span class="t" style="right:530.5px;top:203px;">695.80</span>
<span class="t" style="right:465.5px;top:203px;">1,391.60</span>
<span class="t" style="right:410.5px;top:203px;"><span style="letter-spacing:0.19px">0.00</span></span>
<span class="t" style="left:1219.5px;top:203px;"><span style="letter-spacing:-0.48px">XML</span></span>
<span class="t" style="left:221.5px;top:218px;"><span style="letter-spacing:-0.03px">Internation</span><span class="d">...</span></span>
<span class="t" style="left:296.5px;top:218px;">The Point Orlando Re<span class="d">...</span></span>
<span class="t" style="left:416.5px;top:218px;"><span style="letter-spacing:0.35px">3.0</span></span>
<span class="t" style="left:456.5px;top:218px;"><span style="letter-spacing:-0.15px">Room Only</span></span>
<span class="t" style="left:531.5px;top:218px;"><span style="letter-spacing:-0.26px">One Bedroom </span><span class="d">...</span></span>
<span class="t" style="left:621.5px;top:218px;"><span style="letter-spacing:0.49px">Tue</span></span>
<span class="t" style="left:656.5px;top:218px;"><span style="letter-spacing:-0.04px">03/04/2018</span></span>
<span class="t" style="left:724.5px;top:218px;"><span style="letter-spacing:0.49px">Tue</span></span>
<span class="t" style="left:759.5px;top:218px;">17/04/2018</span>
<span class="t" style="left:827.5px;top:218px;"><span style="letter-spacing:-0.17px">Ocean B</span><span class="d">...</span></span>
<span class="t" style="right:585.5px;top:218px;">1,432.99</span>
<span class="t" style="right:530.5px;top:218px;">716.50</span>
<span class="t" style="right:465.5px;top:218px;">1,432.99</span>
<span class="t" style="right:410.5px;top:218px;"><span style="letter-spacing:0.19px">0.00</span></span>
<span class="t" style="left:1219.5px;top:218px;"><span style="letter-spacing:-0.48px">XML</span></span>
<span class="t" style="left:221.5px;top:233px;"><span style="letter-spacing:-0.04px">Orlando Int</span><span class="d">...</span></span>
<span class="t" style="left:296.5px;top:233px;">The Point Orlando Re<span class="d">...</span></span>
<span class="t" style="left:416.5px;top:233px;"><span style="letter-spacing:0.35px">4.0</span></span>
<span class="t" style="left:456.5px;top:233px;"><span style="letter-spacing:-0.15px">Room Only</span></span>
<span class="t" style="left:531.5px;top:233px;"><span style="letter-spacing:-0.28px">Double King St</span><span class="d">...</span></span>
<span class="t" style="left:621.5px;top:233px;"><span style="letter-spacing:0.49px">Tue</span></span>
<span class="t" style="left:656.5px;top:233px;"><span style="letter-spacing:-0.04px">03/04/2018</span></span>
<span class="t" style="left:724.5px;top:233px;"><span style="letter-spacing:0.49px">Tue</span></span>
<span class="t" style="left:759.5px;top:233px;">17/04/2018</span>
<span class="t" style="left:827.5px;top:233px;"><span style="letter-spacing:-0.16px">Get A Bed</span></span>
<span class="t" style="left:749.5px;width:300px;text-align:center;top:233px;">*</span>
<span class="t" style="right:585.5px;top:233px;">1,442.16</span>
<span class="t" style="right:530.5px;top:233px;">721.08</span>
<span class="t" style="right:465.5px;top:233px;">1,442.16</span>
<span class="t" style="right:410.5px;top:233px;"><span style="letter-spacing:0.19px">0.00</span></span>
<span class="t" style="left:1219.5px;top:233px;"><span style="letter-spacing:-0.48px">XML</span></span>
<span class="t" style="left:221.5px;top:248px;"><span style="letter-spacing:-0.06px">Orlando (FL)</span></span>
<span class="t" style="left:296.5px;top:248px;">The Point Orlando Re<span class="d">...</span></span>
<span class="t" style="left:416.5px;top:248px;"><span style="letter-spacing:0.13px">3.5s</span><span class="d">...</span></span>
<span class="t" style="left:456.5px;top:248px;"><span style="letter-spacing:-0.15px">Room Only</span></span>
<span class="t" style="left:531.5px;top:248px;"><span style="letter-spacing:-0.26px">One Bedroom </span><span class="d">...</span></span>
<span class="t" style="left:621.5px;top:248px;"><span style="letter-spacing:0.49px">Tue</span></span>
<span class="t" style="left:656.5px;top:248px;"><span style="letter-spacing:-0.04px">03/04/2018</span></span>
<span class="t" style="left:724.5px;top:248px;"><span style="letter-spacing:0.49px">Tue</span></span>
<span class="t" style="left:759.5px;top:248px;">17/04/2018</span>
<span class="t" style="left:827.5px;top:248px;"><span style="letter-spacing:-0.21px">Bonotel</span></span>
<span class="t" style="right:585.5px;top:248px;">1,540.40</span>
<span class="t" style="right:530.5px;top:248px;">770.20</span>
<span class="t" style="right:465.5px;top:248px;">1,540.40</span>
<span class="t" style="right:410.5px;top:248px;"><span style="letter-spacing:0.19px">0.00</span></span>
<span class="t" style="left:1219.5px;top:248px;"><span style="letter-spacing:-0.48px">XML</span></span>
<span class="t" style="left:221.5px;top:263px;"><span style="letter-spacing:-0.04px">Orlando Int</span><span class="d">...</span></span>
<span class="t" style="left:296.5px;top:263px;">The Point Orlando Re<span class="d">...</span></span>
<span class="t" style="left:416.5px;top:263px;"><span style="letter-spacing:0.35px">4.0</span></span>
<span class="t" style="left:456.5px;top:263px;"><span style="letter-spacing:-0.15px">Room Only</span></span>
<span class="t" style="left:531.5px;top:263px;"><span style="letter-spacing:-0.26px">One Bedroom </span><span class="d">...</span></span>
<span class="t" style="left:621.5px;top:263px;"><span style="letter-spacing:0.49px">Tue</span></span>
<span class="t" style="left:656.5px;top:263px;"><span style="letter-spacing:-0.04px">03/04/2018</span></span>
<span class="t" style="left:724.5px;top:263px;"><span style="letter-spacing:0.49px">Tue</span></span>
<span class="t" style="left:759.5px;top:263px;">17/04/2018</span>
<span class="t" style="left:827.5px;top:263px;"><span style="letter-spacing:-0.16px">Get A Bed</span></span>
<span class="t" style="left:749.5px;width:300px;text-align:center;top:263px;">*</span>
<span class="t" style="right:585.5px;top:263px;">1,596.38</span>
<span class="t" style="right:530.5px;top:263px;">798.19</span>
<span class="t" style="right:465.5px;top:263px;">1,596.38</span>
<span class="t" style="right:410.5px;top:263px;"><span style="letter-spacing:0.19px">0.00</span></span>
<span class="t" style="left:1219.5px;top:263px;"><span style="letter-spacing:-0.48px">XML</span></span>
<span class="t" style="left:221.5px;top:278px;">Orlando Ar<span class="d">...</span></span>
<span class="t" style="left:296.5px;top:278px;">Sandy Ridge - Ocean<span class="d">...</span></span>
<span class="t" style="left:416.5px;top:278px;"><span style="letter-spacing:-0.28px">Unk</span><span class="d">...</span></span>
<span class="t" style="left:456.5px;top:278px;"><span style="letter-spacing:-0.14px">Unknown</span></span>
<span class="t" style="left:531.5px;top:278px;">Sandy Ridge - <span class="d">...</span></span>
<span class="t" style="left:621.5px;top:278px;"><span style="letter-spacing:0.49px">Tue</span></span>
<span class="t" style="left:656.5px;top:278px;"><span style="letter-spacing:-0.04px">03/04/2018</span></span>
<span class="t" style="left:724.5px;top:278px;"><span style="letter-spacing:0.49px">Tue</span></span>
<span class="t" style="left:759.5px;top:278px;">17/04/2018</span>
<span class="t" style="left:827.5px;top:278px;"><span style="letter-spacing:-0.17px">Ocean B</span><span class="d">...</span></span>
<span class="t" style="right:585.5px;top:278px;">1,756.98</span>
<span class="t" style="right:530.5px;top:278px;">878.49</span>
<span class="t" style="right:465.5px;top:278px;">1,756.98</span>
<span class="t" style="right:410.5px;top:278px;"><span style="letter-spacing:0.19px">0.00</span></span>
<span class="t" style="left:1219.5px;top:278px;"><span style="letter-spacing:-0.48px">XML</span></span>
<span class="t" style="left:221.5px;top:293px;">Orlando Ar<span class="d">...</span></span>
<span class="t" style="left:296.5px;top:293px;">Disney Area Standar<span class="d">...</span></span>
<span class="t" style="left:416.5px;top:293px;">Stan<span class="d">...</span></span>
<span class="t" style="left:456.5px;top:293px;"><span style="letter-spacing:-0.15px">Room Only</span></span>
<span class="t" style="left:531.5px;top:293px;"><span style="letter-spacing:-0.24px">5 Bedroom Sta</span><span class="d">...</span></span>
<span class="t" style="left:621.5px;top:293px;"><span style="letter-spacing:0.49px">Tue</span></span>
<span class="t" style="left:656.5px;top:293px;"><span style="letter-spacing:-0.04px">03/04/2018</span></span>
<span class="t" style="left:724.5px;top:293px;"><span style="letter-spacing:0.49px">Tue</span></span>
<span class="t" style="left:759.5px;top:293px;">17/04/2018</span>
<span class="t" style="left:827.5px;top:293px;"><span style="letter-spacing:-0.17px">Ocean B</span><span class="d">...</span></span>
<span class="t" style="left:749.5px;width:300px;text-align:center;top:293px;">*</span>
<span class="t" style="right:585.5px;top:293px;">1,757.38</span>
<span class="t" style="right:530.5px;top:293px;">878.69</span>
<span class="t" style="right:465.5px;top:293px;">1,757.38</span>
<span class="t" style="right:410.5px;top:293px;"><span style="letter-spacing:0.19px">0.00</span></span>
<span class="t" style="left:1219.5px;top:293px;"><span style="letter-spacing:-0.48px">XML</span></span>
<span class="t" style="left:221.5px;top:308px;">Orlando Ar<span class="d">...</span></span>
<span class="t" style="left:296.5px;top:308px;"><span style="letter-spacing:-0.2px">Windsor Hills - Ocean</span><span class="d">...</span></span>
<span class="t" style="left:416.5px;top:308px;"><span style="letter-spacing:-0.28px">Unk</span><span class="d">...</span></span>
<span class="t" style="left:456.5px;top:308px;"><span style="letter-spacing:-0.14px">Unknown</span></span>
<span class="t" style="left:531.5px;top:308px;"><span style="letter-spacing:-0.22px">Windsor Hills - </span><span class="d">...</span></span>
<span class="t" style="left:621.5px;top:308px;"><span style="letter-spacing:0.49px">Tue</span></span>
<span class="t" style="left:656.5px;top:308px;"><span style="letter-spacing:-0.04px">03/04/2018</span></span>
<span class="t" style="left:724.5px;top:308px;"><span style="letter-spacing:0.49px">Tue</span></span>
<span class="t" style="left:759.5px;top:308px;">17/04/2018</span>
<span class="t" style="left:827.5px;top:308px;"><span style="letter-spacing:-0.17px">Ocean B</span><span class="d">...</span></span>
<span class="t" style="right:585.5px;top:308px;">1,785.14</span>
<span class="t" style="right:530.5px;top:308px;">892.57</span>
<span class="t" style="right:465.5px;top:308px;">1,785.14</span>
<span class="t" style="right:410.5px;top:308px;"><span style="letter-spacing:0.19px">0.00</span></span>
<span class="t" style="left:1219.5px;top:308px;"><span style="letter-spacing:-0.48px">XML</span></span>
<span class="t" style="left:221.5px;top:323px;">Orlando Ar<span class="d">...</span></span>
<span class="t" style="left:296.5px;top:323px;"><span style="letter-spacing:-0.14px">Disney Area Executiv</span><span class="d">...</span></span>
<span class="t" style="left:416.5px;top:323px;"><span style="letter-spacing:0.18px">Exe</span><span class="d">...</span></span>
<span class="t" style="left:456.5px;top:323px;"><span style="letter-spacing:-0.15px">Room Only</span></span>
<span class="t" style="left:531.5px;top:323px;"><span style="letter-spacing:-0.23px">5 Bedroom Exe</span><span class="d">...</span></span>
<span class="t" style="left:621.5px;top:323px;"><span style="letter-spacing:0.49px">Tue</span></span>
<span class="t" style="left:656.5px;top:323px;"><span style="letter-spacing:-0.04px">03/04/2018</span></span>
<span class="t" style="left:724.5px;top:323px;"><span style="letter-spacing:0.49px">Tue</span></span>
<span class="t" style="left:759.5px;top:323px;">17/04/2018</span>
<span class="t" style="left:827.5px;top:323px;"><span style="letter-spacing:-0.17px">Ocean B</span><span class="d">...</span></span>
<span class="t" style="left:749.5px;width:300px;text-align:center;top:323px;">*</span>
<span class="t" style="right:585.5px;top:323px;">1,810.66</span>
<span class="t" style="right:530.5px;top:323px;">905.33</span>
<span class="t" style="right:465.5px;top:323px;">1,810.66</span>
<span class="t" style="right:410.5px;top:323px;"><span style="letter-spacing:0.19px">0.00</span></span>
<span class="t" style="left:1219.5px;top:323px;"><span style="letter-spacing:-0.48px">XML</span></span>
<span class="t" style="left:221.5px;top:338px;"><span style="letter-spacing:-0.62px">Kissimmee</span></span>
<span class="t" style="left:296.5px;top:338px;">Reunion - Ocean - 505</span>
<span class="t" style="left:416.5px;top:338px;"><span style="letter-spacing:-0.28px">Unk</span><span class="d">...</span></span>
<span class="t" style="left:456.5px;top:338px;"><span style="letter-spacing:-0.14px">Unknown</span></span>
<span class="t" style="left:531.5px;top:338px;">Reunion - Oce<span class="d">...</span></span>
<span class="t" style="left:621.5px;top:338px;"><span style="letter-spacing:0.49px">Tue</span></span>
<span class="t" style="left:656.5px;top:338px;"><span style="letter-spacing:-0.04px">03/04/2018</span></span>
<span class="t" style="left:724.5px;top:338px;"><span style="letter-spacing:0.49px">Tue</span></span>
<span class="t" style="left:759.5px;top:338px;">17/04/2018</span>
<span class="t" style="left:827.5px;top:338px;"><span style="letter-spacing:-0.17px">Ocean B</span><span class="d">...</span></span>
<span class="t" style="right:585.5px;top:338px;">1,892.03</span>
<span class="t" style="right:530.5px;top:338px;">946.02</span>
<span class="t" style="right:465.5px;top:338px;">1,892.03</span>
<span class="t" style="right:410.5px;top:338px;"><span style="letter-spacing:0.19px">0.00</span></span>
<span class="t" style="left:1219.5px;top:338px;"><span style="letter-spacing:-0.48px">XML</span></span>
<span class="t" style="left:221.5px;top:353px;">Orlando Ar<span class="d">...</span></span>
<span class="t" style="left:296.5px;top:353px;"><span style="letter-spacing:0.06px">Calabay Parc At Tow</span><span class="d">...</span></span>
<span class="t" style="left:416.5px;top:353px;"><span style="letter-spacing:-0.45px">Villa</span></span>
<span class="t" style="left:456.5px;top:353px;"><span style="letter-spacing:-0.15px">Room Only</span></span>
<span class="t" style="left:531.5px;top:353px;"><span style="letter-spacing:-0.35px">5 Bedroom Home</span></span>
<span class="t" style="left:621.5px;top:353px;"><span style="letter-spacing:0.49px">Tue</span></span>
<span class="t" style="left:656.5px;top:353px;"><span style="letter-spacing:-0.04px">03/04/2018</span></span>
<span class="t" style="left:724.5px;top:353px;"><span style="letter-spacing:0.49px">Tue</span></span>
<span class="t" style="left:759.5px;top:353px;">17/04/2018</span>
<span class="t" style="left:827.5px;top:353px;"><span style="letter-spacing:-0.17px">Ocean B</span><span class="d">...</span></span>
<span class="t" style="left:749.5px;width:300px;text-align:center;top:353px;">*</span>
<span class="t" style="right:585.5px;top:353px;">1,909.02</span>
<span class="t" style="right:530.5px;top:353px;">954.51</span>
<span class="t" style="right:465.5px;top:353px;">1,909.02</span>
<span class="t" style="right:410.5px;top:353px;"><span style="letter-spacing:0.19px">0.00</span></span>
<span class="t" style="left:1219.5px;top:353px;"><span style="letter-spacing:-0.48px">XML</span></span>
<span class="t" style="left:221.5px;top:368px;">Orlando Ar<span class="d">...</span></span>
<span class="t" style="left:296.5px;top:368px;"><span style="letter-spacing:-0.15px">Calabay Parc Homes</span></span>
<span class="t" style="left:416.5px;top:368px;"><span style="letter-spacing:-0.45px">Villa</span></span>
<span class="t" style="left:456.5px;top:368px;"><span style="letter-spacing:-0.15px">Room Only</span></span>
<span class="t" style="left:531.5px;top:368px;"><span style="letter-spacing:-0.35px">5 Bedroom Home</span></span>
<span class="t" style="left:621.5px;top:368px;"><span style="letter-spacing:0.49px">Tue</span></span>
<span class="t" style="left:656.5px;top:368px;"><span style="letter-spacing:-0.04px">03/04/2018</span></span>
<span class="t" style="left:724.5px;top:368px;"><span style="letter-spacing:0.49px">Tue</span></span>
<span class="t" style="left:759.5px;top:368px;">17/04/2018</span>
<span class="t" style="left:827.5px;top:368px;"><span style="letter-spacing:-0.17px">Ocean B</span><span class="d">...</span></span>
<span class="t" style="left:749.5px;width:300px;text-align:center;top:368px;">*</span>
<span class="t" style="right:585.5px;top:368px;">1,909.02</span>
<span class="t" style="right:530.5px;top:368px;">954.51</span>
<span class="t" style="right:465.5px;top:368px;">1,909.02</span>
<span class="t" style="right:410.5px;top:368px;"><span style="letter-spacing:0.19px">0.00</span></span>
<span class="t" style="left:1219.5px;top:368px;"><span style="letter-spacing:-0.48px">XML</span></span>
<span class="t" style="left:221.5px;top:383px;color:#fff">Orlando Ar<span class="d">...</span></span>
<span class="t" style="left:296.5px;top:383px;color:#fff"><span style="letter-spacing:-0.25px">High Grove Homes</span></span>
<span class="t" style="left:416.5px;top:383px;color:#fff"><span style="letter-spacing:-0.45px">Villa</span></span>
<span class="t" style="left:456.5px;top:383px;color:#fff"><span style="letter-spacing:-0.15px">Room Only</span></span>
<span class="t" style="left:531.5px;top:383px;color:#fff"><span style="letter-spacing:-0.35px">5 Bedroom Home</span></span>
<span class="t" style="left:621.5px;top:383px;color:#fff"><span style="letter-spacing:0.49px">Tue</span></span>
<span class="t" style="left:656.5px;top:383px;color:#fff"><span style="letter-spacing:-0.04px">03/04/2018</span></span>
<span class="t" style="left:724.5px;top:383px;color:#fff"><span style="letter-spacing:0.49px">Tue</span></span>
<span class="t" style="left:759.5px;top:383px;color:#fff">17/04/2018</span>
<span class="t" style="left:827.5px;top:383px;color:#fff"><span style="letter-spacing:-0.17px">Ocean B</span><span class="d">...</span></span>
<span class="t" style="left:749.5px;width:300px;text-align:center;top:383px;color:#fff">*</span>
<span class="t" style="right:585.5px;top:383px;color:#fff">1,909.02</span>
<span class="t" style="right:530.5px;top:383px;color:#fff">954.51</span>
<span class="t" style="right:465.5px;top:383px;color:#fff">1,909.02</span>
<span class="t" style="right:410.5px;top:383px;color:#fff"><span style="letter-spacing:0.19px">0.00</span></span>
<span class="t" style="left:1219.5px;top:383px;color:#fff"><span style="letter-spacing:-0.48px">XML</span></span>
<span class="t" style="left:221.5px;top:398px;">Orlando Ar<span class="d">...</span></span>
<span class="t" style="left:296.5px;top:398px;"><span style="letter-spacing:-0.24px">Tuscan Hills Homes</span></span>
<span class="t" style="left:416.5px;top:398px;"><span style="letter-spacing:-0.45px">Villa</span></span>
<span class="t" style="left:456.5px;top:398px;"><span style="letter-spacing:-0.15px">Room Only</span></span>
<span class="t" style="left:531.5px;top:398px;"><span style="letter-spacing:-0.35px">5 Bedroom Home</span></span>
<span class="t" style="left:621.5px;top:398px;"><span style="letter-spacing:0.49px">Tue</span></span>
<span class="t" style="left:656.5px;top:398px;"><span style="letter-spacing:-0.04px">03/04/2018</span></span>
<span class="t" style="left:724.5px;top:398px;"><span style="letter-spacing:0.49px">Tue</span></span>
<span class="t" style="left:759.5px;top:398px;">17/04/2018</span>
<span class="t" style="left:827.5px;top:398px;"><span style="letter-spacing:-0.17px">Ocean B</span><span class="d">...</span></span>
<span class="t" style="left:749.5px;width:300px;text-align:center;top:398px;">*</span>
<span class="t" style="right:585.5px;top:398px;">1,909.02</span>
<span class="t" style="right:530.5px;top:398px;">954.51</span>
<span class="t" style="right:465.5px;top:398px;">1,909.02</span>
<span class="t" style="right:410.5px;top:398px;"><span style="letter-spacing:0.19px">0.00</span></span>
<span class="t" style="left:1219.5px;top:398px;"><span style="letter-spacing:-0.48px">XML</span></span>
<span class="t" style="left:221.5px;top:413px;">Orlando Ar<span class="d">...</span></span>
<span class="t" style="left:296.5px;top:413px;"><span style="letter-spacing:-0.19px">Legacy Park Homes</span></span>
<span class="t" style="left:416.5px;top:413px;"><span style="letter-spacing:-0.45px">Villa</span></span>
<span class="t" style="left:456.5px;top:413px;"><span style="letter-spacing:-0.15px">Room Only</span></span>
<span class="t" style="left:531.5px;top:413px;"><span style="letter-spacing:-0.35px">5 Bedroom Home</span></span>
<span class="t" style="left:621.5px;top:413px;"><span style="letter-spacing:0.49px">Tue</span></span>
<span class="t" style="left:656.5px;top:413px;"><span style="letter-spacing:-0.04px">03/04/2018</span></span>
<span class="t" style="left:724.5px;top:413px;"><span style="letter-spacing:0.49px">Tue</span></span>
<span class="t" style="left:759.5px;top:413px;">17/04/2018</span>
<span class="t" style="left:827.5px;top:413px;"><span style="letter-spacing:-0.17px">Ocean B</span><span class="d">...</span></span>
<span class="t" style="left:749.5px;width:300px;text-align:center;top:413px;">*</span>
<span class="t" style="right:585.5px;top:413px;">1,909.02</span>
<span class="t" style="right:530.5px;top:413px;">954.51</span>
<span class="t" style="right:465.5px;top:413px;">1,909.02</span>
<span class="t" style="right:410.5px;top:413px;"><span style="letter-spacing:0.19px">0.00</span></span>
<span class="t" style="left:1219.5px;top:413px;"><span style="letter-spacing:-0.48px">XML</span></span>
<span class="t" style="left:221.5px;top:428px;">Orlando Ar<span class="d">...</span></span>
<span class="t" style="left:296.5px;top:428px;"><span style="letter-spacing:-0.31px">Marbella Homes</span></span>
<span class="t" style="left:416.5px;top:428px;"><span style="letter-spacing:-0.45px">Villa</span></span>
<span class="t" style="left:456.5px;top:428px;"><span style="letter-spacing:-0.15px">Room Only</span></span>
<span class="t" style="left:531.5px;top:428px;"><span style="letter-spacing:-0.35px">5 Bedroom Home</span></span>
<span class="t" style="left:621.5px;top:428px;"><span style="letter-spacing:0.49px">Tue</span></span>
<span class="t" style="left:656.5px;top:428px;"><span style="letter-spacing:-0.04px">03/04/2018</span></span>
<span class="t" style="left:724.5px;top:428px;"><span style="letter-spacing:0.49px">Tue</span></span>
<span class="t" style="left:759.5px;top:428px;">17/04/2018</span>
<span class="t" style="left:827.5px;top:428px;"><span style="letter-spacing:-0.17px">Ocean B</span><span class="d">...</span></span>
<span class="t" style="left:749.5px;width:300px;text-align:center;top:428px;">*</span>
<span class="t" style="right:585.5px;top:428px;">1,909.02</span>
<span class="t" style="right:530.5px;top:428px;">954.51</span>
<span class="t" style="right:465.5px;top:428px;">1,909.02</span>
<span class="t" style="right:410.5px;top:428px;"><span style="letter-spacing:0.19px">0.00</span></span>
<span class="t" style="left:1219.5px;top:428px;"><span style="letter-spacing:-0.48px">XML</span></span>
<span class="t" style="left:221.5px;top:443px;">Orlando Ar<span class="d">...</span></span>
<span class="t" style="left:296.5px;top:443px;"><span style="letter-spacing:-0.05px">Orange Tree Homes</span></span>
<span class="t" style="left:416.5px;top:443px;"><span style="letter-spacing:-0.45px">Villa</span></span>
<span class="t" style="left:456.5px;top:443px;"><span style="letter-spacing:-0.15px">Room Only</span></span>
<span class="t" style="left:531.5px;top:443px;"><span style="letter-spacing:-0.35px">5 Bedroom Home</span></span>
<span class="t" style="left:621.5px;top:443px;"><span style="letter-spacing:0.49px">Tue</span></span>
<span class="t" style="left:656.5px;top:443px;"><span style="letter-spacing:-0.04px">03/04/2018</span></span>
<span class="t" style="left:724.5px;top:443px;"><span style="letter-spacing:0.49px">Tue</span></span>
<span class="t" style="left:759.5px;top:443px;">17/04/2018</span>
<span class="t" style="left:827.5px;top:443px;"><span style="letter-spacing:-0.17px">Ocean B</span><span class="d">...</span></span>
<span class="t" style="left:749.5px;width:300px;text-align:center;top:443px;">*</span>
<span class="t" style="right:585.5px;top:443px;">1,909.02</span>
<span class="t" style="right:530.5px;top:443px;">954.51</span>
<span class="t" style="right:465.5px;top:443px;">1,909.02</span>
<span class="t" style="right:410.5px;top:443px;"><span style="letter-spacing:0.19px">0.00</span></span>
<span class="t" style="left:1219.5px;top:443px;"><span style="letter-spacing:-0.48px">XML</span></span>
<span class="t" style="left:221.5px;top:458px;">Orlando Ar<span class="d">...</span></span>
<span class="t" style="left:296.5px;top:458px;"><span style="letter-spacing:-0.23px">Sandy Ridge Homes</span></span>
<span class="t" style="left:416.5px;top:458px;"><span style="letter-spacing:-0.45px">Villa</span></span>
<span class="t" style="left:456.5px;top:458px;"><span style="letter-spacing:-0.15px">Room Only</span></span>
<span class="t" style="left:531.5px;top:458px;"><span style="letter-spacing:-0.35px">5 Bedroom Home</span></span>
<span class="t" style="left:621.5px;top:458px;"><span style="letter-spacing:0.49px">Tue</span></span>
<span class="t" style="left:656.5px;top:458px;"><span style="letter-spacing:-0.04px">03/04/2018</span></span>
<span class="t" style="left:724.5px;top:458px;"><span style="letter-spacing:0.49px">Tue</span></span>
<span class="t" style="left:759.5px;top:458px;">17/04/2018</span>
<span class="t" style="left:827.5px;top:458px;"><span style="letter-spacing:-0.17px">Ocean B</span><span class="d">...</span></span>
<span class="t" style="left:749.5px;width:300px;text-align:center;top:458px;">*</span>
<span class="t" style="right:585.5px;top:458px;">1,909.02</span>
<span class="t" style="right:530.5px;top:458px;">954.51</span>
<span class="t" style="right:465.5px;top:458px;">1,909.02</span>
<span class="t" style="right:410.5px;top:458px;"><span style="letter-spacing:0.19px">0.00</span></span>
<span class="t" style="left:1219.5px;top:458px;"><span style="letter-spacing:-0.48px">XML</span></span>
<span class="t" style="left:221.5px;top:473px;">Orlando Ar<span class="d">...</span></span>
<span class="t" style="left:296.5px;top:473px;"><span style="letter-spacing:-0.21px">Southern Dunes Homes</span></span>
<span class="t" style="left:416.5px;top:473px;"><span style="letter-spacing:-0.45px">Villa</span></span>
<span class="t" style="left:456.5px;top:473px;"><span style="letter-spacing:-0.15px">Room Only</span></span>
<span class="t" style="left:531.5px;top:473px;"><span style="letter-spacing:-0.35px">5 Bedroom Home</span></span>
<span class="t" style="left:621.5px;top:473px;"><span style="letter-spacing:0.49px">Tue</span></span>
<span class="t" style="left:656.5px;top:473px;"><span style="letter-spacing:-0.04px">03/04/2018</span></span>
<span class="t" style="left:724.5px;top:473px;"><span style="letter-spacing:0.49px">Tue</span></span>
<span class="t" style="left:759.5px;top:473px;">17/04/2018</span>
<span class="t" style="left:827.5px;top:473px;"><span style="letter-spacing:-0.17px">Ocean B</span><span class="d">...</span></span>
<span class="t" style="left:749.5px;width:300px;text-align:center;top:473px;">*</span>
<span class="t" style="right:585.5px;top:473px;">1,909.02</span>
<span class="t" style="right:530.5px;top:473px;">954.51</span>
<span class="t" style="right:465.5px;top:473px;">1,909.02</span>
<span class="t" style="right:410.5px;top:473px;"><span style="letter-spacing:0.19px">0.00</span></span>
<span class="t" style="left:1219.5px;top:473px;"><span style="letter-spacing:-0.48px">XML</span></span>
<span class="t" style="left:221.5px;top:488px;"><span style="letter-spacing:-0.62px">Kissimmee</span></span>
<span class="t" style="left:296.5px;top:488px;">Disney Area Standard</span>
<span class="t" style="left:416.5px;top:488px;"><span style="letter-spacing:0.35px">3.7</span></span>
<span class="t" style="left:456.5px;top:488px;"><span style="letter-spacing:-0.18px">Roomonly</span></span>
<span class="t" style="left:531.5px;top:488px;">Standard, 5 Be<span class="d">...</span></span>
<span class="t" style="left:621.5px;top:488px;"><span style="letter-spacing:0.49px">Tue</span></span>
<span class="t" style="left:656.5px;top:488px;"><span style="letter-spacing:-0.04px">03/04/2018</span></span>
<span class="t" style="left:724.5px;top:488px;"><span style="letter-spacing:0.49px">Tue</span></span>
<span class="t" style="left:759.5px;top:488px;">17/04/2018</span>
<span class="t" style="left:827.5px;top:488px;"><span style="letter-spacing:0.08px">Tourico </span><span class="d">...</span></span>
<span class="t" style="right:585.5px;top:488px;">1,932.98</span>
<span class="t" style="right:530.5px;top:488px;">966.49</span>
<span class="t" style="right:465.5px;top:488px;">1,932.98</span>
<span class="t" style="right:410.5px;top:488px;"><span style="letter-spacing:0.19px">0.00</span></span>
<span class="t" style="left:1219.5px;top:488px;"><span style="letter-spacing:-0.48px">XML</span></span>
<span class="t" style="left:221.5px;top:503px;">Orlando Ar<span class="d">...</span></span>
<span class="t" style="left:296.5px;top:503px;"><span style="letter-spacing:-0.15px">Paradise Palms Resor</span><span class="d">...</span></span>
<span class="t" style="left:416.5px;top:503px;"><span style="letter-spacing:-0.45px">Villa</span></span>
<span class="t" style="left:456.5px;top:503px;"><span style="letter-spacing:-0.15px">Room Only</span></span>
<span class="t" style="left:531.5px;top:503px;"><span style="letter-spacing:-0.14px">5 Bedroom To</span><span class="d">...</span></span>
<span class="t" style="left:621.5px;top:503px;"><span style="letter-spacing:0.49px">Tue</span></span>
<span class="t" style="left:656.5px;top:503px;"><span style="letter-spacing:-0.04px">03/04/2018</span></span>
<span class="t" style="left:724.5px;top:503px;"><span style="letter-spacing:0.49px">Tue</span></span>
<span class="t" style="left:759.5px;top:503px;">17/04/2018</span>
<span class="t" style="left:827.5px;top:503px;"><span style="letter-spacing:-0.17px">Ocean B</span><span class="d">...</span></span>
<span class="t" style="left:749.5px;width:300px;text-align:center;top:503px;">*</span>
<span class="t" style="right:585.5px;top:503px;">1,950.00</span>
<span class="t" style="right:530.5px;top:503px;">975.00</span>
<span class="t" style="right:465.5px;top:503px;">1,950.00</span>
<span class="t" style="right:410.5px;top:503px;"><span style="letter-spacing:0.19px">0.00</span></span>
<span class="t" style="left:1219.5px;top:503px;"><span style="letter-spacing:-0.48px">XML</span></span>
<span class="t" style="left:221.5px;top:518px;">Orlando Ar<span class="d">...</span></span>
<span class="t" style="left:296.5px;top:518px;"><span style="letter-spacing:-0.14px">Disney Area Executiv</span><span class="d">...</span></span>
<span class="t" style="left:416.5px;top:518px;"><span style="letter-spacing:0.18px">Exe</span><span class="d">...</span></span>
<span class="t" style="left:456.5px;top:518px;"><span style="letter-spacing:-0.15px">Room Only</span></span>
<span class="t" style="left:531.5px;top:518px;"><span style="letter-spacing:-0.23px">5 Bedroom Exe</span><span class="d">...</span></span>
<span class="t" style="left:621.5px;top:518px;"><span style="letter-spacing:0.49px">Tue</span></span>
<span class="t" style="left:656.5px;top:518px;"><span style="letter-spacing:-0.04px">03/04/2018</span></span>
<span class="t" style="left:724.5px;top:518px;"><span style="letter-spacing:0.49px">Tue</span></span>
<span class="t" style="left:759.5px;top:518px;">17/04/2018</span>
<span class="t" style="left:827.5px;top:518px;"><span style="letter-spacing:-0.17px">Ocean B</span><span class="d">...</span></span>
<span class="t" style="left:749.5px;width:300px;text-align:center;top:518px;">*</span>
<span class="t" style="right:585.5px;top:518px;">1,967.21</span>
<span class="t" style="right:530.5px;top:518px;">983.61</span>
<span class="t" style="right:465.5px;top:518px;">1,967.21</span>
<span class="t" style="right:410.5px;top:518px;"><span style="letter-spacing:0.19px">0.00</span></span>
<span class="t" style="left:1219.5px;top:518px;"><span style="letter-spacing:-0.48px">XML</span></span>
<span class="t" style="left:221.5px;top:533px;"><span style="letter-spacing:-0.62px">Kissimmee</span></span>
<span class="t" style="left:296.5px;top:533px;">Disney Area Executive</span>
<span class="t" style="left:416.5px;top:533px;"><span style="letter-spacing:0.35px">3.7</span></span>
<span class="t" style="left:456.5px;top:533px;"><span style="letter-spacing:-0.18px">Roomonly</span></span>
<span class="t" style="left:531.5px;top:533px;">Standard, 5 Be<span class="d">...</span></span>
<span class="t" style="left:621.5px;top:533px;"><span style="letter-spacing:0.49px">Tue</span></span>
<span class="t" style="left:656.5px;top:533px;"><span style="letter-spacing:-0.04px">03/04/2018</span></span>
<span class="t" style="left:724.5px;top:533px;"><span style="letter-spacing:0.49px">Tue</span></span>
<span class="t" style="left:759.5px;top:533px;">17/04/2018</span>
<span class="t" style="left:827.5px;top:533px;"><span style="letter-spacing:0.08px">Tourico </span><span class="d">...</span></span>
<span class="t" style="right:585.5px;top:533px;">1,997.94</span>
<span class="t" style="right:530.5px;top:533px;">998.97</span>
<span class="t" style="right:465.5px;top:533px;">1,997.94</span>
<span class="t" style="right:410.5px;top:533px;"><span style="letter-spacing:0.19px">0.00</span></span>
<span class="t" style="left:1219.5px;top:533px;"><span style="letter-spacing:-0.48px">XML</span></span>
<span class="t" style="left:221.5px;top:548px;"><span style="letter-spacing:-0.18px">Orlando Pri</span><span class="d">...</span></span>
<span class="t" style="left:296.5px;top:548px;"><span style="letter-spacing:-0.14px">Disney Area Executiv</span><span class="d">...</span></span>
<span class="t" style="left:416.5px;top:548px;"><span style="letter-spacing:0.35px">3.0</span></span>
<span class="t" style="left:456.5px;top:548px;">Self Catering</span>
<span class="t" style="left:531.5px;top:548px;"><span style="letter-spacing:-0.23px">5 Bedroom Exe</span><span class="d">...</span></span>
<span class="t" style="left:621.5px;top:548px;"><span style="letter-spacing:0.49px">Tue</span></span>
<span class="t" style="left:656.5px;top:548px;"><span style="letter-spacing:-0.04px">03/04/2018</span></span>
<span class="t" style="left:724.5px;top:548px;"><span style="letter-spacing:0.49px">Tue</span></span>
<span class="t" style="left:759.5px;top:548px;">17/04/2018</span>
<span class="t" style="left:827.5px;top:548px;"><span style="letter-spacing:-0.16px">Get A Bed</span></span>
<span class="t" style="left:749.5px;width:300px;text-align:center;top:548px;">*</span>
<span class="t" style="right:585.5px;top:548px;">2,005.66</span>
<span class="t" style="right:530.5px;top:548px;">1,002.83</span>
<span class="t" style="right:465.5px;top:548px;">2,005.66</span>
<span class="t" style="right:410.5px;top:548px;"><span style="letter-spacing:0.19px">0.00</span></span>
<span class="t" style="left:1219.5px;top:548px;"><span style="letter-spacing:-0.48px">XML</span></span>
<span class="t" style="left:221.5px;top:563px;">Orlando Ar<span class="d">...</span></span>
<span class="t" style="left:296.5px;top:563px;">High Gate - Ocean - <span class="d">...</span></span>
<span class="t" style="left:416.5px;top:563px;"><span style="letter-spacing:-0.28px">Unk</span><span class="d">...</span></span>
<span class="t" style="left:456.5px;top:563px;"><span style="letter-spacing:-0.14px">Unknown</span></span>
<span class="t" style="left:531.5px;top:563px;"><span style="letter-spacing:-0.2px">High Gate - Oc</span><span class="d">...</span></span>
<span class="t" style="left:621.5px;top:563px;"><span style="letter-spacing:0.49px">Tue</span></span>
<span class="t" style="left:656.5px;top:563px;"><span style="letter-spacing:-0.04px">03/04/2018</span></span>
<span class="t" style="left:724.5px;top:563px;"><span style="letter-spacing:0.49px">Tue</span></span>
<span class="t" style="left:759.5px;top:563px;">17/04/2018</span>
<span class="t" style="left:827.5px;top:563px;"><span style="letter-spacing:-0.17px">Ocean B</span><span class="d">...</span></span>
<span class="t" style="right:585.5px;top:563px;">2,042.13</span>
<span class="t" style="right:530.5px;top:563px;">1,021.07</span>
<span class="t" style="right:465.5px;top:563px;">2,042.13</span>
<span class="t" style="right:410.5px;top:563px;"><span style="letter-spacing:0.19px">0.00</span></span>
<span class="t" style="left:1219.5px;top:563px;"><span style="letter-spacing:-0.48px">XML</span></span>
<span class="t" style="left:221.5px;top:578px;">Orlando Ar<span class="d">...</span></span>
<span class="t" style="left:296.5px;top:578px;"><span style="letter-spacing:-0.3px">Glenbrook Homes</span></span>
<span class="t" style="left:416.5px;top:578px;"><span style="letter-spacing:-0.45px">Villa</span></span>
<span class="t" style="left:456.5px;top:578px;"><span style="letter-spacing:-0.15px">Room Only</span></span>
<span class="t" style="left:531.5px;top:578px;"><span style="letter-spacing:-0.35px">5 Bedroom Home</span></span>
<span class="t" style="left:621.5px;top:578px;"><span style="letter-spacing:0.49px">Tue</span></span>
<span class="t" style="left:656.5px;top:578px;"><span style="letter-spacing:-0.04px">03/04/2018</span></span>
<span class="t" style="left:724.5px;top:578px;"><span style="letter-spacing:0.49px">Tue</span></span>
<span class="t" style="left:759.5px;top:578px;">17/04/2018</span>
<span class="t" style="left:827.5px;top:578px;"><span style="letter-spacing:-0.17px">Ocean B</span><span class="d">...</span></span>
<span class="t" style="left:749.5px;width:300px;text-align:center;top:578px;">*</span>
<span class="t" style="right:585.5px;top:578px;">2,084.43</span>
<span class="t" style="right:530.5px;top:578px;">1,042.22</span>
<span class="t" style="right:465.5px;top:578px;">2,084.43</span>
<span class="t" style="right:410.5px;top:578px;"><span style="letter-spacing:0.19px">0.00</span></span>
<span class="t" style="left:1219.5px;top:578px;"><span style="letter-spacing:-0.48px">XML</span></span>
<span class="t" style="left:221.5px;top:593px;">Orlando Ar<span class="d">...</span></span>
<span class="t" style="left:296.5px;top:593px;">West Haven Homes</span>
<span class="t" style="left:416.5px;top:593px;"><span style="letter-spacing:-0.45px">Villa</span></span>
<span class="t" style="left:456.5px;top:593px;"><span style="letter-spacing:-0.15px">Room Only</span></span>
<span class="t" style="left:531.5px;top:593px;"><span style="letter-spacing:-0.35px">5 Bedroom Home</span></span>
<span class="t" style="left:621.5px;top:593px;"><span style="letter-spacing:0.49px">Tue</span></span>
<span class="t" style="left:656.5px;top:593px;"><span style="letter-spacing:-0.04px">03/04/2018</span></span>
<span class="t" style="left:724.5px;top:593px;"><span style="letter-spacing:0.49px">Tue</span></span>
<span class="t" style="left:759.5px;top:593px;">17/04/2018</span>
<span class="t" style="left:827.5px;top:593px;"><span style="letter-spacing:-0.17px">Ocean B</span><span class="d">...</span></span>
<span class="t" style="left:749.5px;width:300px;text-align:center;top:593px;">*</span>
<span class="t" style="right:585.5px;top:593px;">2,084.43</span>
<span class="t" style="right:530.5px;top:593px;">1,042.22</span>
<span class="t" style="right:465.5px;top:593px;">2,084.43</span>
<span class="t" style="right:410.5px;top:593px;"><span style="letter-spacing:0.19px">0.00</span></span>
<span class="t" style="left:1219.5px;top:593px;"><span style="letter-spacing:-0.48px">XML</span></span>
<span class="t" style="left:221.5px;top:608px;"><span style="letter-spacing:-0.18px">Orlando Pri</span><span class="d">...</span></span>
<span class="t" style="left:296.5px;top:608px;"><span style="letter-spacing:-0.19px">Legacy Park Homes</span></span>
<span class="t" style="left:416.5px;top:608px;"><span style="letter-spacing:0.35px">4.0</span></span>
<span class="t" style="left:456.5px;top:608px;">Self Catering</span>
<span class="t" style="left:531.5px;top:608px;"><span style="letter-spacing:-0.4px">5 Bedroom Villa</span><span class="d">...</span></span>
<span class="t" style="left:621.5px;top:608px;"><span style="letter-spacing:0.49px">Tue</span></span>
<span class="t" style="left:656.5px;top:608px;"><span style="letter-spacing:-0.04px">03/04/2018</span></span>
<span class="t" style="left:724.5px;top:608px;"><span style="letter-spacing:0.49px">Tue</span></span>
<span class="t" style="left:759.5px;top:608px;">17/04/2018</span>
<span class="t" style="left:827.5px;top:608px;"><span style="letter-spacing:-0.16px">Get A Bed</span></span>
<span class="t" style="left:749.5px;width:300px;text-align:center;top:608px;">*</span>
<span class="t" style="right:585.5px;top:608px;">2,099.41</span>
<span class="t" style="right:530.5px;top:608px;">1,049.71</span>
<span class="t" style="right:465.5px;top:608px;">2,099.41</span>
<span class="t" style="right:410.5px;top:608px;"><span style="letter-spacing:0.19px">0.00</span></span>
<span class="t" style="left:1219.5px;top:608px;"><span style="letter-spacing:-0.48px">XML</span></span>
<span class="t" style="left:221.5px;top:623px;"><span style="letter-spacing:-0.18px">Orlando Pri</span><span class="d">...</span></span>
<span class="t" style="left:296.5px;top:623px;"><span style="letter-spacing:-0.25px">High Grove Homes</span></span>
<span class="t" style="left:416.5px;top:623px;"><span style="letter-spacing:0.35px">4.0</span></span>
<span class="t" style="left:456.5px;top:623px;">Self Catering</span>
<span class="t" style="left:531.5px;top:623px;"><span style="letter-spacing:-0.4px">5 Bedroom Villa</span><span class="d">...</span></span>
<span class="t" style="left:621.5px;top:623px;"><span style="letter-spacing:0.49px">Tue</span></span>
<span class="t" style="left:656.5px;top:623px;"><span style="letter-spacing:-0.04px">03/04/2018</span></span>
<span class="t" style="left:724.5px;top:623px;"><span style="letter-spacing:0.49px">Tue</span></span>
<span class="t" style="left:759.5px;top:623px;">17/04/2018</span>
<span class="t" style="left:827.5px;top:623px;"><span style="letter-spacing:-0.16px">Get A Bed</span></span>
<span class="t" style="left:749.5px;width:300px;text-align:center;top:623px;">*</span>
<span class="t" style="right:585.5px;top:623px;">2,099.41</span>
<span class="t" style="right:530.5px;top:623px;">1,049.71</span>
<span class="t" style="right:465.5px;top:623px;">2,099.41</span>
<span class="t" style="right:410.5px;top:623px;"><span style="letter-spacing:0.19px">0.00</span></span>
<span class="t" style="left:1219.5px;top:623px;"><span style="letter-spacing:-0.48px">XML</span></span>
<span class="t" style="left:221.5px;top:638px;"><span style="letter-spacing:-0.18px">Orlando Pri</span><span class="d">...</span></span>
<span class="t" style="left:296.5px;top:638px;"><span style="letter-spacing:-0.05px">Orange Tree Homes</span></span>
<span class="t" style="left:416.5px;top:638px;"><span style="letter-spacing:0.35px">3.0</span></span>
<span class="t" style="left:456.5px;top:638px;">Self Catering</span>
<span class="t" style="left:531.5px;top:638px;"><span style="letter-spacing:-0.4px">5 Bedroom Villa</span><span class="d">...</span></span>
<span class="t" style="left:621.5px;top:638px;"><span style="letter-spacing:0.49px">Tue</span></span>
<span class="t" style="left:656.5px;top:638px;"><span style="letter-spacing:-0.04px">03/04/2018</span></span>
<span class="t" style="left:724.5px;top:638px;"><span style="letter-spacing:0.49px">Tue</span></span>
<span class="t" style="left:759.5px;top:638px;">17/04/2018</span>
<span class="t" style="left:827.5px;top:638px;"><span style="letter-spacing:-0.16px">Get A Bed</span></span>
<span class="t" style="left:749.5px;width:300px;text-align:center;top:638px;">*</span>
<span class="t" style="right:585.5px;top:638px;">2,099.41</span>
<span class="t" style="right:530.5px;top:638px;">1,049.71</span>
<span class="t" style="right:465.5px;top:638px;">2,099.41</span>
<span class="t" style="right:410.5px;top:638px;"><span style="letter-spacing:0.19px">0.00</span></span>
<span class="t" style="left:1219.5px;top:638px;"><span style="letter-spacing:-0.48px">XML</span></span>
<span class="t" style="left:221.5px;top:653px;"><span style="letter-spacing:-0.18px">Orlando Pri</span><span class="d">...</span></span>
<span class="t" style="left:296.5px;top:653px;"><span style="letter-spacing:-0.15px">Calabay Parc Homes</span></span>
<span class="t" style="left:416.5px;top:653px;"><span style="letter-spacing:0.35px">4.0</span></span>
<span class="t" style="left:456.5px;top:653px;">Self Catering</span>
<span class="t" style="left:531.5px;top:653px;"><span style="letter-spacing:-0.4px">5 Bedroom Villa</span><span class="d">...</span></span>
<span class="t" style="left:621.5px;top:653px;"><span style="letter-spacing:0.49px">Tue</span></span>
<span class="t" style="left:656.5px;top:653px;"><span style="letter-spacing:-0.04px">03/04/2018</span></span>
<span class="t" style="left:724.5px;top:653px;"><span style="letter-spacing:0.49px">Tue</span></span>
<span class="t" style="left:759.5px;top:653px;">17/04/2018</span>
<span class="t" style="left:827.5px;top:653px;"><span style="letter-spacing:-0.16px">Get A Bed</span></span>
<span class="t" style="left:749.5px;width:300px;text-align:center;top:653px;">*</span>
<span class="t" style="right:585.5px;top:653px;">2,099.41</span>
<span class="t" style="right:530.5px;top:653px;">1,049.71</span>
<span class="t" style="right:465.5px;top:653px;">2,099.41</span>
<span class="t" style="right:410.5px;top:653px;"><span style="letter-spacing:0.19px">0.00</span></span>
<span class="t" style="left:1219.5px;top:653px;"><span style="letter-spacing:-0.48px">XML</span></span>
<span class="t" style="left:221.5px;top:668px;"><span style="letter-spacing:-0.18px">Orlando Pri</span><span class="d">...</span></span>
<span class="t" style="left:296.5px;top:668px;"><span style="letter-spacing:0.06px">Calabay Parc At Tow</span><span class="d">...</span></span>
<span class="t" style="left:416.5px;top:668px;"><span style="letter-spacing:0.35px">4.0</span></span>
<span class="t" style="left:456.5px;top:668px;">Self Catering</span>
<span class="t" style="left:531.5px;top:668px;"><span style="letter-spacing:-0.4px">5 Bedroom Villa</span><span class="d">...</span></span>
<span class="t" style="left:621.5px;top:668px;"><span style="letter-spacing:0.49px">Tue</span></span>
<span class="t" style="left:656.5px;top:668px;"><span style="letter-spacing:-0.04px">03/04/2018</span></span>
<span class="t" style="left:724.5px;top:668px;"><span style="letter-spacing:0.49px">Tue</span></span>
<span class="t" style="left:759.5px;top:668px;">17/04/2018</span>
<span class="t" style="left:827.5px;top:668px;"><span style="letter-spacing:-0.16px">Get A Bed</span></span>
<span class="t" style="left:749.5px;width:300px;text-align:center;top:668px;">*</span>
<span class="t" style="right:585.5px;top:668px;">2,099.41</span>
<span class="t" style="right:530.5px;top:668px;">1,049.71</span>
<span class="t" style="right:465.5px;top:668px;">2,099.41</span>
<span class="t" style="right:410.5px;top:668px;"><span style="letter-spacing:0.19px">0.00</span></span>
<span class="t" style="left:1219.5px;top:668px;"><span style="letter-spacing:-0.48px">XML</span></span>
<span class="t" style="left:221.5px;top:683px;"><span style="letter-spacing:-0.18px">Orlando Pri</span><span class="d">...</span></span>
<span class="t" style="left:296.5px;top:683px;"><span style="letter-spacing:-0.21px">Southern Dunes Homes</span></span>
<span class="t" style="left:416.5px;top:683px;"><span style="letter-spacing:0.35px">4.0</span></span>
<span class="t" style="left:456.5px;top:683px;">Self Catering</span>
<span class="t" style="left:531.5px;top:683px;"><span style="letter-spacing:-0.4px">5 Bedroom Villa</span><span class="d">...</span></span>
<span class="t" style="left:621.5px;top:683px;"><span style="letter-spacing:0.49px">Tue</span></span>
<span class="t" style="left:656.5px;top:683px;"><span style="letter-spacing:-0.04px">03/04/2018</span></span>
<span class="t" style="left:724.5px;top:683px;"><span style="letter-spacing:0.49px">Tue</span></span>
<span class="t" style="left:759.5px;top:683px;">17/04/2018</span>
<span class="t" style="left:827.5px;top:683px;"><span style="letter-spacing:-0.16px">Get A Bed</span></span>
<span class="t" style="left:749.5px;width:300px;text-align:center;top:683px;">*</span>
<span class="t" style="right:585.5px;top:683px;">2,099.41</span>
<span class="t" style="right:530.5px;top:683px;">1,049.71</span>
<span class="t" style="right:465.5px;top:683px;">2,099.41</span>
<span class="t" style="right:410.5px;top:683px;"><span style="letter-spacing:0.19px">0.00</span></span>
<span class="t" style="left:1219.5px;top:683px;"><span style="letter-spacing:-0.48px">XML</span></span>
<span class="t" style="left:221.5px;top:698px;">Orlando Ar<span class="d">...</span></span>
<span class="t" style="left:296.5px;top:698px;"><span style="letter-spacing:-0.19px">Trafalgar Village Homes</span></span>
<span class="t" style="left:416.5px;top:698px;"><span style="letter-spacing:-0.45px">Villa</span></span>
<span class="t" style="left:456.5px;top:698px;"><span style="letter-spacing:-0.15px">Room Only</span></span>
<span class="t" style="left:531.5px;top:698px;"><span style="letter-spacing:-0.35px">5 Bedroom Home</span></span>
<span class="t" style="left:621.5px;top:698px;"><span style="letter-spacing:0.49px">Tue</span></span>
<span class="t" style="left:656.5px;top:698px;"><span style="letter-spacing:-0.04px">03/04/2018</span></span>
<span class="t" style="left:724.5px;top:698px;"><span style="letter-spacing:0.49px">Tue</span></span>
<span class="t" style="left:759.5px;top:698px;">17/04/2018</span>
<span class="t" style="left:827.5px;top:698px;"><span style="letter-spacing:-0.17px">Ocean B</span><span class="d">...</span></span>
<span class="t" style="left:749.5px;width:300px;text-align:center;top:698px;">*</span>
<span class="t" style="right:585.5px;top:698px;">2,138.52</span>
<span class="t" style="right:530.5px;top:698px;">1,069.26</span>
<span class="t" style="right:465.5px;top:698px;">2,138.52</span>
<span class="t" style="right:410.5px;top:698px;"><span style="letter-spacing:0.19px">0.00</span></span>
<span class="t" style="left:1219.5px;top:698px;"><span style="letter-spacing:-0.48px">XML</span></span>
<span class="t" style="left:221.5px;top:713px;"><span style="letter-spacing:-0.18px">Orlando Pri</span><span class="d">...</span></span>
<span class="t" style="left:296.5px;top:713px;"><span style="letter-spacing:-0.14px">Disney Area Executiv</span><span class="d">...</span></span>
<span class="t" style="left:416.5px;top:713px;"><span style="letter-spacing:0.35px">4.0</span></span>
<span class="t" style="left:456.5px;top:713px;">Self Catering</span>
<span class="t" style="left:531.5px;top:713px;"><span style="letter-spacing:-0.23px">5 Bedroom Exe</span><span class="d">...</span></span>
<span class="t" style="left:621.5px;top:713px;"><span style="letter-spacing:0.49px">Tue</span></span>
<span class="t" style="left:656.5px;top:713px;"><span style="letter-spacing:-0.04px">03/04/2018</span></span>
<span class="t" style="left:724.5px;top:713px;"><span style="letter-spacing:0.49px">Tue</span></span>
<span class="t" style="left:759.5px;top:713px;">17/04/2018</span>
<span class="t" style="left:827.5px;top:713px;"><span style="letter-spacing:-0.16px">Get A Bed</span></span>
<span class="t" style="left:749.5px;width:300px;text-align:center;top:713px;">*</span>
<span class="t" style="right:585.5px;top:713px;">2,178.73</span>
<span class="t" style="right:530.5px;top:713px;">1,089.37</span>
<span class="t" style="right:465.5px;top:713px;">2,178.73</span>
<span class="t" style="right:410.5px;top:713px;"><span style="letter-spacing:0.19px">0.00</span></span>
<span class="t" style="left:1219.5px;top:713px;"><span style="letter-spacing:-0.48px">XML</span></span>
<span class="t" style="left:221.5px;top:728px;">Orlando Ar<span class="d">...</span></span>
<span class="t" style="left:296.5px;top:728px;"><span style="letter-spacing:-0.18px">Highlands Reserve H</span><span class="d">...</span></span>
<span class="t" style="left:416.5px;top:728px;"><span style="letter-spacing:-0.45px">Villa</span></span>
<span class="t" style="left:456.5px;top:728px;"><span style="letter-spacing:-0.15px">Room Only</span></span>
<span class="t" style="left:531.5px;top:728px;"><span style="letter-spacing:-0.35px">5 Bedroom Home</span></span>
<span class="t" style="left:621.5px;top:728px;"><span style="letter-spacing:0.49px">Tue</span></span>
<span class="t" style="left:656.5px;top:728px;"><span style="letter-spacing:-0.04px">03/04/2018</span></span>
<span class="t" style="left:724.5px;top:728px;"><span style="letter-spacing:0.49px">Tue</span></span>
<span class="t" style="left:759.5px;top:728px;">17/04/2018</span>
<span class="t" style="left:827.5px;top:728px;"><span style="letter-spacing:-0.17px">Ocean B</span><span class="d">...</span></span>
<span class="t" style="left:749.5px;width:300px;text-align:center;top:728px;">*</span>
<span class="t" style="right:585.5px;top:728px;">2,224.59</span>
<span class="t" style="right:530.5px;top:728px;">1,112.30</span>
<span class="t" style="right:465.5px;top:728px;">2,224.59</span>
<span class="t" style="right:410.5px;top:728px;"><span style="letter-spacing:0.19px">0.00</span></span>
<span class="t" style="left:1219.5px;top:728px;"><span style="letter-spacing:-0.48px">XML</span></span>
<span class="t" style="left:221.5px;top:743px;">Orlando Ar<span class="d">...</span></span>
<span class="t" style="left:296.5px;top:743px;"><span style="letter-spacing:-0.25px">Disney Area Platinum</span><span class="d">...</span></span>
<span class="t" style="left:416.5px;top:743px;"><span style="letter-spacing:0.43px">Tow</span><span class="d">...</span></span>
<span class="t" style="left:456.5px;top:743px;"><span style="letter-spacing:-0.15px">Room Only</span></span>
<span class="t" style="left:531.5px;top:743px;"><span style="letter-spacing:-0.14px">5 Bedroom To</span><span class="d">...</span></span>
<span class="t" style="left:621.5px;top:743px;"><span style="letter-spacing:0.49px">Tue</span></span>
<span class="t" style="left:656.5px;top:743px;"><span style="letter-spacing:-0.04px">03/04/2018</span></span>
<span class="t" style="left:724.5px;top:743px;"><span style="letter-spacing:0.49px">Tue</span></span>
<span class="t" style="left:759.5px;top:743px;">17/04/2018</span>
<span class="t" style="left:827.5px;top:743px;"><span style="letter-spacing:-0.17px">Ocean B</span><span class="d">...</span></span>
<span class="t" style="left:749.5px;width:300px;text-align:center;top:743px;">*</span>
<span class="t" style="right:585.5px;top:743px;">2,252.46</span>
<span class="t" style="right:530.5px;top:743px;">1,126.23</span>
<span class="t" style="right:465.5px;top:743px;">2,252.46</span>
<span class="t" style="right:410.5px;top:743px;"><span style="letter-spacing:0.19px">0.00</span></span>
<span class="t" style="left:1219.5px;top:743px;"><span style="letter-spacing:-0.48px">XML</span></span>
<div style="left:1573px;top:153px;width:16px;height:603px;background:repeating-conic-gradient(#fff 0 25%,#D4D0C8 0 50%) 0 0/2px 2px"></div>
<div class="raised" style="left:1573px;top:153px;width:16px;height:16px;"></div>
<div style="left:1577px;top:159px"><svg width="7" height="4" viewBox="0 0 7 4" style="display:block"><path d="M0 4h7L3.5 .5z" fill="#000"/></svg></div>
<div class="raised" style="left:1573px;top:169px;width:16px;height:279px;"></div>
<div class="raised" style="left:1573px;top:740px;width:16px;height:16px;"></div>
<div style="left:1577px;top:746px"><svg width="7" height="4" viewBox="0 0 7 4" style="display:block"><path d="M0 0h7L3.5 3.5z" fill="#000"/></svg></div>
<span class="t" style="left:221.5px;top:783px;">First portion: 8.0 sec, total search time: 15.4 sec</span>
<div class="btn" style="left:1560px;top:778px;width:23px;height:22px;"></div>
<span class="t" style="left:1567px;top:778px;font:bold 18px 'Liberation Serif',serif;color:#1A4FB0;line-height:20px;letter-spacing:0">i</span>
<div style="left:215px;top:805px;width:1378px;height:1px;background:#808080"></div>
<div style="left:215px;top:806px;width:52px;height:17px;background:#D4D0C8"></div>
<span class="t" style="left:217.5px;top:808px;color:#000"><span style="letter-spacing:-0.44px">Summary</span></span>
<div style="left:268px;top:806px;width:40px;height:17px;background:#D4D0C8"></div>
<span class="t" style="left:270.5px;top:808px;color:#000">Search</span>
<div style="left:309px;top:806px;width:168px;height:17px;background:#C8FFC0"></div>
<span class="t" style="left:311.5px;top:808px;color:#000"><span style="letter-spacing:-0.05px">Acc 1A,1C MCO; 06/04/2018 12n</span></span>
<div style="left:477px;top:806px;width:168px;height:17px;background:#C0C0FF"></div>
<span class="t" style="left:479.5px;top:808px;color:#000"><span style="letter-spacing:-0.05px">Acc 1A,1C MCO; 06/04/2018 10n</span></span>
<div style="left:645px;top:806px;width:168px;height:17px;background:#C8FFC0"></div>
<span class="t" style="left:647.5px;top:808px;color:#000"><span style="letter-spacing:-0.05px">Acc 1A,1C MCO; 06/04/2018 12n</span></span>
<div style="left:812px;top:804px;width:168px;height:19px;background:#E6E2D6"></div>
<div style="left:813px;top:822px;width:167px;height:1px;background:#808080"></div>
<div style="left:979px;top:805px;width:1px;height:18px;background:#A0A0A0"></div>
<div style="left:813px;top:805px;width:166px;height:17px;background:#00007F"></div>
<span class="t" style="left:815.5px;top:808px;color:#fff"><span style="letter-spacing:-0.05px">Acc 1A,1C MCO; 03/04/2018 14n</span></span>
<div style="left:979px;top:806px;width:52px;height:17px;background:#C0C0FF"></div>
<span class="t" style="left:983.5px;top:808px;color:#000"><span style="letter-spacing:0.01px">Car MCO</span></span>
<div style="left:1031px;top:806px;width:95px;height:17px;background:#D4D0C8"></div>
<span class="t" style="left:1034.5px;top:808px;color:#000"><span style="letter-spacing:-0.34px">Financial Summary</span></span>
<div style="left:267px;top:806px;width:1px;height:17px;background:#808080"></div>
<div style="left:308px;top:806px;width:1px;height:17px;background:#808080"></div>
<div style="left:476px;top:806px;width:1px;height:17px;background:#808080"></div>
<div style="left:644px;top:806px;width:1px;height:17px;background:#808080"></div>
<div style="left:1030px;top:806px;width:1px;height:17px;background:#808080"></div>
<div style="left:1126px;top:806px;width:1px;height:17px;background:#808080"></div>
<span class="t" style="left:781.5px;top:832px;"><span style="letter-spacing:-0.14px">User: 481 - Harika Parmar</span></span>
<span class="t" style="left:915.5px;top:832px;">Retailer: 'Ocean-Florida'</span>
<span class="t" style="left:1041.5px;top:832px;">Client: none</span>
<span class="t" style="right:8.5px;top:832px;"><span style="letter-spacing:-0.19px">09:52 GMT</span></span>
<div style="left:0px;top:857px;width:1600px;height:1px;background:#fff"></div>
<div class="btn" style="left:2px;top:860px;width:52px;height:38px;"></div>
<div style="left:3.5px;top:870px"><svg width="17" height="15" viewBox="0 0 17 15" style="display:block"><path d="M2.600 1.600C4.800 .2 6.600 .6 8.200 1.800L7 6.600C5.400 5.400 3.600 5 1.400 6.400z" fill="#E8472A"/><path d="M9 2.200C10.800 3.400 12.800 3.600 15.600 2L14.400 6.800C12 8.200 9.800 8 7.800 7z" fill="#63B236"/><path d="M1.200 7.400C3.400 6 5.200 6.400 6.800 7.600L5.600 12.400C4 11.200 2.200 10.800 0 12.200z" fill="#3F7FDB"/><path d="M7.600 8C9.400 9.200 11.600 9.400 14.200 7.800L13 12.600C10.600 14 8.400 13.800 6.400 12.800z" fill="#F6C324"/></svg></div>
<span class="b" style="left:19.5px;top:873px;"><span style="letter-spacing:0.22px">Start</span></span>
<div class="btn" style="left:63px;top:860px;width:159px;height:38px;"></div>
<div style="left:67px;top:863px;width:32px;height:32px;background:#fff"></div>
<div style="left:67px;top:863px"><svg width="32" height="32" viewBox="0 0 32 32" style="display:block"><defs><radialGradient id="gm32" cx="0.34" cy="0.3" r="0.66"><stop offset="0" stop-color="#FFE85E"/><stop offset=".25" stop-color="#FAB924"/><stop offset=".55" stop-color="#E67C12"/><stop offset=".85" stop-color="#B8480A"/><stop offset="1" stop-color="#A03A06"/></radialGradient></defs><path d="M2 13C2 8 6 5 10 5C14 5 18 7 22 8.200L29 10.600C30.400 11 30.600 13 30 14L19 24.800C18 25.800 16.400 25.800 15.400 24.800L3.400 16.600C2.400 15.600 2 14.400 2 13z" fill="url(#gm32)"/></svg></div>
<span class="t" style="left:101.5px;top:873px;"><span style="letter-spacing:-0.0px">Interactive - Ocean-F</span><span class="d">...</span></span>
<div style="left:222px;top:860px;width:160px;height:38px;border:1px solid;border-color:#404040 #fff #fff #404040;box-shadow:inset 1px 1px 0 #808080;background:#fff"></div>
<div style="left:227px;top:864px;width:32px;height:32px;background:#fff"></div>
<div style="left:227px;top:864px"><svg width="32" height="32" viewBox="0 0 32 32" style="display:block"><defs><radialGradient id="gm32" cx="0.34" cy="0.3" r="0.66"><stop offset="0" stop-color="#FFE85E"/><stop offset=".25" stop-color="#FAB924"/><stop offset=".55" stop-color="#E67C12"/><stop offset=".85" stop-color="#B8480A"/><stop offset="1" stop-color="#A03A06"/></radialGradient></defs><path d="M2 13C2 8 6 5 10 5C14 5 18 7 22 8.200L29 10.600C30.400 11 30.600 13 30 14L19 24.800C18 25.800 16.400 25.800 15.400 24.800L3.400 16.600C2.400 15.600 2 14.400 2 13z" fill="url(#gm32)"/></svg></div>
<span class="b" style="left:261.5px;top:873px;"><span style="letter-spacing:-0.04px">Interactive [2] - O</span><span class="d">...</span></span>
<div class="sunken" style="left:1408px;top:860px;width:190px;height:37px;"></div>
<div style="left:1415px;top:871px"><svg width="16" height="16" viewBox="0 0 16 16" style="display:block"><path d="M0 .6C3 0 6 1 9 .4L7.400 8 0 7z" fill="#F5A01E"/><path d="M9 .4C11.500 1 14 0 16 .6V6L7.400 8z" fill="#2E6FD0"/><path d="M0 7L7.400 8 6.400 16C4 15.400 2 16 0 15.400z" fill="#3FA02E"/><path d="M7.400 8L16 6v9.400C13 16 9 15.400 6.400 16z" fill="#E03A1E"/><path d="M4 1.400L6 7" stroke="#FFD050" stroke-width="1.400"/></svg></div>
<div style="left:1438px;top:873px"><svg width="17" height="10" viewBox="0 0 17 10" style="display:block"><rect x=".5" y="2" width="12" height="6" fill="#3FAE3A" stroke="#1E6A1E" stroke-width=".8"/><path d="M2 9v1.4M4 9v1.4M6 9v1.4M8 9v1.4" stroke="#C8A81E" stroke-width="1"/><rect x="9" y="3" width="3" height="3" fill="#222"/><path d="M14 1v8M14 1h2M14 4h1.6" stroke="#222" stroke-width="1"/></svg></div>
<div style="left:1462px;top:870px"><svg width="17" height="17" viewBox="0 0 17 17" style="display:block"><rect x="4" y="3" width="12" height="10" fill="#E8E8E8" stroke="#555" stroke-width="1"/><rect x="6" y="5" width="8" height="6" fill="#C8C8C8"/><path d="M5 15h10" stroke="#555" stroke-width="1.4"/><path d="M2 1v6h3V1zM3.5 7v5" stroke="#555" stroke-width="1" fill="#fff"/></svg></div>
<div style="left:1486px;top:871px"><svg width="17" height="16" viewBox="0 0 17 16" style="display:block"><path d="M.8 5h2.800L7.600 1v13.600L3.600 10.400H.8z" fill="#F8F8F8" stroke="#5A5A5A" stroke-width=".9"/><circle cx="11.800" cy="11" r="4.300" fill="#E8242C" stroke="#F8B0B0" stroke-width=".5"/><path d="M9.800 9l4 4M13.800 9l-4 4" stroke="#fff" stroke-width="1.600"/></svg></div>
<div style="left:1580px;top:873px"><svg width="15" height="12" viewBox="0 0 15 12" style="display:block"><rect x="0" y="0" width="15" height="12" fill="#2E6FD0"/><rect x="0" y="0" width="15" height="5" fill="#5A9AE8"/><rect x="1" y="9" width="13" height="2" fill="#1C3E8A"/><rect x="2" y="8" width="2" height="1.4" fill="#E8D040"/></svg></div>
<span class="t" style="left:1394.4px;width:300px;text-align:center;top:865px;"><span style="letter-spacing:0.05px">09:52</span></span>
<span class="t" style="left:1394.3px;width:300px;text-align:center;top:881px;"><span style="letter-spacing:-0.05px">27/07/2017</span></span>
</div></body></html>
